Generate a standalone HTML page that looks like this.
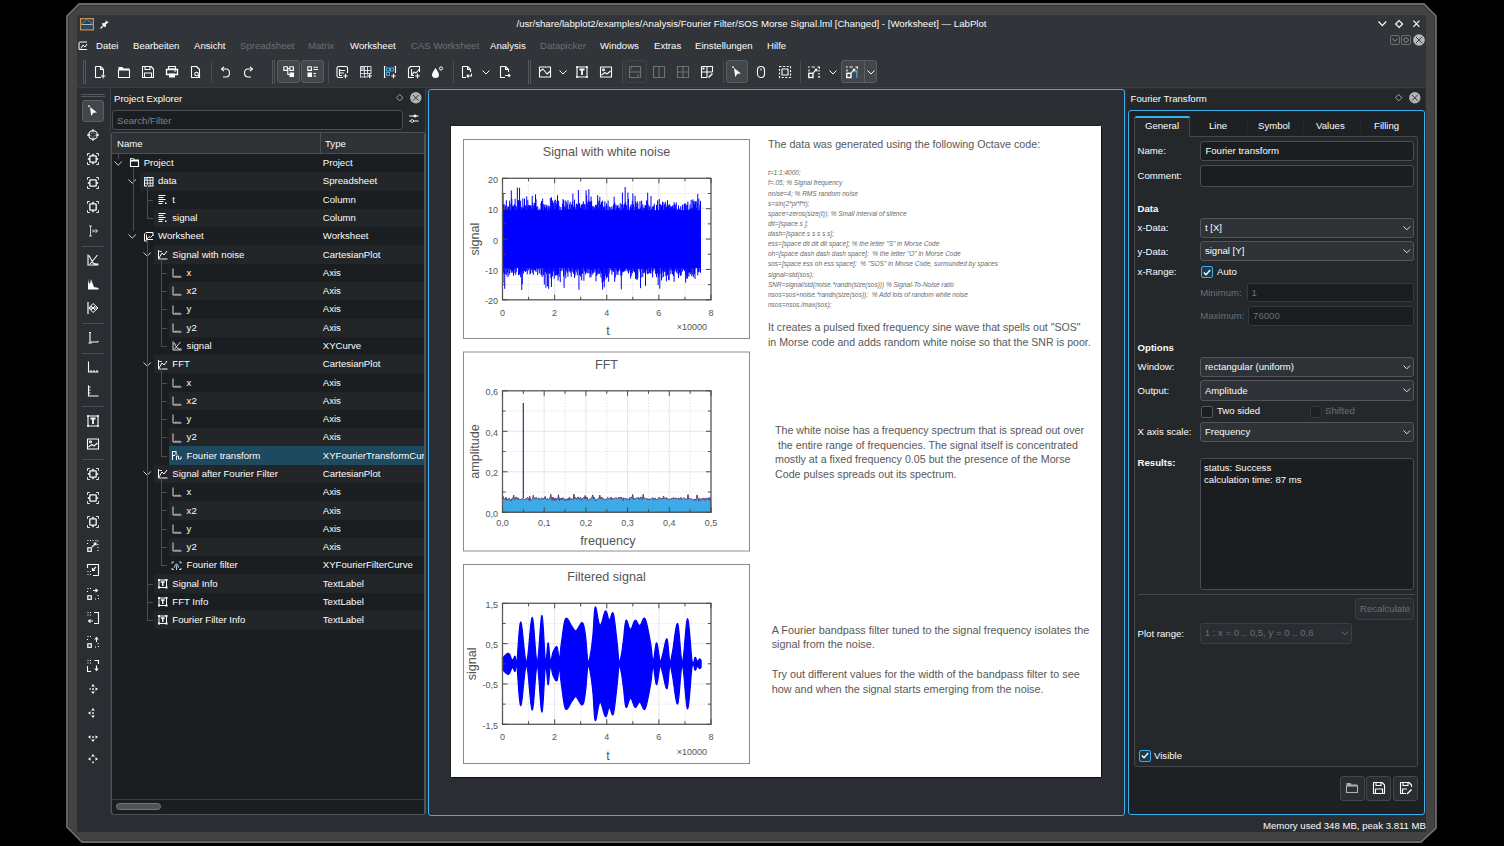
<!DOCTYPE html><html><head><meta charset="utf-8"><style>
*{margin:0;padding:0;box-sizing:border-box}
html,body{width:1504px;height:846px;overflow:hidden;background:#000}
body{position:relative;font-family:"Liberation Sans",sans-serif;}
.t{position:absolute;white-space:nowrap;line-height:1.2}
svg{position:absolute;overflow:visible}
</style></head><body>
<svg style="left:0px;top:0px;" width="1504" height="846" viewBox="0 0 1504 846"><polygon points="79,4 1424,4 1436,16 1436,828 1421,842 82,842 67,827 67,16" fill="#434343" stroke="#686868" stroke-width="1.8"/><polygon points="80,5.5 1423,5.5 1434.5,17 1434.5,827 1420,840.5 83,840.5 68.5,826 68.5,17" fill="none" stroke="#353535" stroke-width="0.8"/></svg>
<div style="position:absolute;left:77px;top:14px;width:1349px;height:1px;background:#42464c;"></div>
<div style="position:absolute;left:77px;top:15px;width:1349px;height:816.5px;background:#2a2e32;"></div>
<div style="position:absolute;left:77px;top:15px;width:1349px;height:72px;background:#313539;"></div>
<svg style="left:80px;top:18px;" width="14" height="12.5" viewBox="0 0 14 12.5"><rect x="0.6" y="0.6" width="12.8" height="11.3" fill="#2f4152" stroke="#c8944a" stroke-width="1.2"/><path d="M1.5 6 L6.8 1.2 L12.5 6" fill="none" stroke="#5b8fbf" stroke-width="0.9"/><path d="M1.5 6.5 H12.5" stroke="#c8d8e8" stroke-width="0.8"/><path d="M2.5 7 L6.8 11 L11.5 7" fill="none" stroke="#3f607e" stroke-width="0.8"/></svg>
<svg style="left:100px;top:19.5px;" width="9" height="9" viewBox="0 0 9 9"><path d="M0.5 8.5 L3.5 5.5" stroke="#fcfcfc" stroke-width="1.1"/><path d="M2.2 4 L5 6.8 L5.6 6.2 L5.2 4.8 L7.6 2.6 L8.2 2.8 L6.2 0.8 L6.4 1.4 L4.2 3.8 L2.8 3.4 Z" fill="#fcfcfc" stroke="#fcfcfc" stroke-width="0.9" stroke-linejoin="round"/></svg>
<div class="t" style="left:77px;width:1349px;text-align:center;top:18.3px;font-size:9.65px;color:#fcfcfc">/usr/share/labplot2/examples/Analysis/Fourier Filter/SOS Morse Signal.lml [Changed] - [Worksheet] — LabPlot</div>
<svg style="left:1378px;top:21px;" width="9" height="6" viewBox="0 0 9 6"><path d="M0.5 0.5 L4.3 4.7 L8.2 0.5" fill="none" stroke="#fcfcfc" stroke-width="1.2"/></svg>
<svg style="left:1395px;top:20px;" width="9" height="9" viewBox="0 0 9 9"><path d="M4.1 0.6 L7.6 4 L4.1 7.5 L0.6 4 Z" fill="none" stroke="#fcfcfc" stroke-width="1.2"/></svg>
<svg style="left:1413px;top:20px;" width="7" height="8" viewBox="0 0 7 8"><path d="M0.4 0.6 L6.4 6.8 M6.4 0.6 L0.4 6.8" fill="none" stroke="#fcfcfc" stroke-width="1.2"/></svg>
<svg style="left:78px;top:41px;" width="10" height="9" viewBox="0 0 10 9"><path d="M1 8.5 V2 Q1 1 2 1 H9 M3 7.5 L5 4 L7 6 L9 3 M1 8.5 H9" fill="none" stroke="#fcfcfc" stroke-width="1"/></svg>
<div class="t" style="left:96px;top:39.55px;font-size:9.6px;color:#fcfcfc;">Datei</div>
<div class="t" style="left:133px;top:39.55px;font-size:9.6px;color:#fcfcfc;">Bearbeiten</div>
<div class="t" style="left:194px;top:39.55px;font-size:9.6px;color:#fcfcfc;">Ansicht</div>
<div class="t" style="left:240px;top:39.55px;font-size:9.6px;color:#6b6f73;">Spreadsheet</div>
<div class="t" style="left:308px;top:39.55px;font-size:9.6px;color:#6b6f73;">Matrix</div>
<div class="t" style="left:350px;top:39.55px;font-size:9.6px;color:#fcfcfc;">Worksheet</div>
<div class="t" style="left:411px;top:39.55px;font-size:9.6px;color:#6b6f73;">CAS Worksheet</div>
<div class="t" style="left:490px;top:39.55px;font-size:9.6px;color:#fcfcfc;">Analysis</div>
<div class="t" style="left:540px;top:39.55px;font-size:9.6px;color:#6b6f73;">Datapicker</div>
<div class="t" style="left:600px;top:39.55px;font-size:9.6px;color:#fcfcfc;">Windows</div>
<div class="t" style="left:654px;top:39.55px;font-size:9.6px;color:#fcfcfc;">Extras</div>
<div class="t" style="left:695px;top:39.55px;font-size:9.6px;color:#fcfcfc;">Einstellungen</div>
<div class="t" style="left:767px;top:39.55px;font-size:9.6px;color:#fcfcfc;">Hilfe</div>
<div style="position:absolute;left:1390px;top:35px;width:10px;height:10px;border:1px solid #6a6e72;border-radius:2px;"></div>
<svg style="left:1392px;top:38px;" width="6" height="4" viewBox="0 0 6 4"><path d="M0.3 0.5 L3 3.2 L5.7 0.5" fill="none" stroke="#9a9da0" stroke-width="0.9"/></svg>
<div style="position:absolute;left:1401px;top:35px;width:10px;height:10px;border:1px solid #6a6e72;border-radius:2px;"></div>
<svg style="left:1403px;top:37px;" width="6" height="6" viewBox="0 0 6 6"><path d="M3 0.3 L5.7 3 L3 5.7 L0.3 3 Z" fill="none" stroke="#9a9da0" stroke-width="0.9"/></svg>
<svg style="left:1413px;top:34px;" width="12" height="12" viewBox="0 0 12 12"><circle cx="6" cy="6" r="5.8" fill="#b9b9b9"/><path d="M3 3 L9 9 M9 3 L3 9" stroke="#2a2a2a" stroke-width="0.9"/></svg>
<div style="position:absolute;left:77px;top:87px;width:1349px;height:1px;background:#3b3f43;"></div>
<div style="position:absolute;left:83px;top:60px;width:1px;height:24px;background:#55595d;"></div><div style="position:absolute;left:85px;top:60px;width:1px;height:24px;background:#55595d;"></div>
<svg style="left:94.0px;top:65.8px;opacity:1.0;" width="12" height="12" viewBox="0 0 12 12"><path d="M1.5 0.5 H6.5 L9.5 3.5 V8 M7 11.5 H1.5 V0.5" fill="none" stroke="#fcfcfc" stroke-width="1.1" stroke-linejoin="round"/><path d="M6.5 0.5 V3.5 H9.5" fill="none" stroke="#fcfcfc" stroke-width="1.1" stroke-linejoin="round"/><path d="M9.2 7.8 V12.2 M6.999999999999999 10 H11.399999999999999" stroke="#fcfcfc" stroke-width="1.1"/></svg>
<svg style="left:118.0px;top:65.8px;opacity:1.0;" width="12" height="12" viewBox="0 0 12 12"><path d="M0.5 1 H4.5 L5.5 2.5 H11.5 V4 H0.5 Z" fill="#fcfcfc"/><rect x="0.5" y="4" width="11" height="7.5" fill="none" stroke="#fcfcfc" stroke-width="1.1" stroke-linejoin="round"/></svg>
<svg style="left:142.0px;top:65.8px;opacity:1.0;" width="12" height="12" viewBox="0 0 12 12"><path d="M0.5 0.5 H9 L11.5 3 V11.5 H0.5 Z" fill="none" stroke="#fcfcfc" stroke-width="1.1" stroke-linejoin="round"/><rect x="3" y="0.5" width="5" height="3" fill="none" stroke="#fcfcfc" stroke-width="1.1" stroke-linejoin="round"/><rect x="2.5" y="7" width="7" height="4.5" fill="none" stroke="#fcfcfc" stroke-width="1.1" stroke-linejoin="round"/></svg>
<svg style="left:166.0px;top:65.8px;opacity:1.0;" width="12" height="12" viewBox="0 0 12 12"><rect x="2.5" y="0.5" width="7" height="2.5" fill="none" stroke="#fcfcfc" stroke-width="1.1" stroke-linejoin="round"/><path d="M0.5 3.5 H11.5 V8.5 H0.5 Z" fill="none" stroke="#fcfcfc" stroke-width="1.3"/><rect x="3" y="7.5" width="6" height="4" fill="#fcfcfc"/><path d="M8 5 H10" stroke="#fcfcfc"/></svg>
<svg style="left:190.0px;top:65.8px;opacity:1.0;" width="12" height="12" viewBox="0 0 12 12"><path d="M1.5 0.5 H6.5 L9.5 3.5 V11.5 H1.5 Z" fill="none" stroke="#fcfcfc" stroke-width="1.1" stroke-linejoin="round"/><circle cx="6.5" cy="8" r="1.8" fill="none" stroke="#fcfcfc" stroke-width="1.1" stroke-linejoin="round"/><path d="M7.8 9.3 L10 11.5" fill="none" stroke="#fcfcfc" stroke-width="1.1" stroke-linejoin="round"/></svg>
<div style="position:absolute;left:210.5px;top:61px;width:1px;height:22px;background:#4a4e52;"></div>
<svg style="left:219.0px;top:65.8px;opacity:1.0;" width="12" height="12" viewBox="0 0 12 12"><path d="M3 3 H7 Q10.5 3 10.5 7 Q10.5 11 6.5 11 H4" fill="none" stroke="#fcfcfc" stroke-width="1.1" stroke-linejoin="round"/><path d="M5 0.8 L2.5 3 L5 5.2" fill="none" stroke="#fcfcfc" stroke-width="1.1" stroke-linejoin="round"/></svg>
<svg style="left:243.0px;top:65.8px;opacity:1.0;" width="12" height="12" viewBox="0 0 12 12"><path d="M9 3 H5 Q1.5 3 1.5 7 Q1.5 11 5.5 11 H8" fill="none" stroke="#fcfcfc" stroke-width="1.1" stroke-linejoin="round"/><path d="M7 0.8 L9.5 3 L7 5.2" fill="none" stroke="#fcfcfc" stroke-width="1.1" stroke-linejoin="round"/></svg>
<div style="position:absolute;left:272px;top:60px;width:1px;height:24px;background:#55595d;"></div><div style="position:absolute;left:274px;top:60px;width:1px;height:24px;background:#55595d;"></div>
<div style="position:absolute;left:277px;top:60px;width:23px;height:23px;background:#43474b;border:1px solid #5b5f63;border-radius:3px;"></div>
<div style="position:absolute;left:301px;top:60px;width:23px;height:23px;background:#43474b;border:1px solid #5b5f63;border-radius:3px;"></div>
<svg style="left:282.5px;top:65.8px;opacity:1.0;" width="12" height="12" viewBox="0 0 12 12"><rect x="0.8" y="0.8" width="3.6" height="3.6" fill="none" stroke="#fcfcfc" stroke-width="1.1" stroke-linejoin="round"/><rect x="6.8" y="0.8" width="3.6" height="3.6" fill="none" stroke="#fcfcfc" stroke-width="1.1" stroke-linejoin="round"/><path d="M4.4 2.6 H6.8 M4.8 4.4 V8.5 H6.5" fill="none" stroke="#fcfcfc" stroke-width="1.1" stroke-linejoin="round"/><rect x="6.5" y="6.5" width="4.5" height="4.5" fill="#fcfcfc"/></svg>
<svg style="left:306.5px;top:65.8px;opacity:1.0;" width="12" height="12" viewBox="0 0 12 12"><rect x="0.8" y="0.8" width="3.6" height="3.6" fill="none" stroke="#fcfcfc" stroke-width="1.1" stroke-linejoin="round"/><path d="M6.5 1.2 H11 M6.5 3.5 H11 M6.5 7.5 H9 M6.5 10 H9" stroke="#fcfcfc" stroke-width="1.1"/><rect x="0.5" y="6.5" width="4.5" height="4.5" fill="#fcfcfc"/></svg>
<div style="position:absolute;left:327.5px;top:61px;width:1px;height:22px;background:#4a4e52;"></div>
<svg style="left:336.0px;top:65.8px;opacity:1.0;" width="12" height="12" viewBox="0 0 12 12"><path d="M1 1.5 Q1 0.5 3 0.5 H10 Q11.5 0.5 11.5 2 V7 M1 1.5 V10 Q1 11.5 3 11.5 H7" fill="none" stroke="#fcfcfc" stroke-width="1.1" stroke-linejoin="round"/><path d="M3.5 4.5 H9 M3.5 7 H8 M3.5 9.5 H6 M3.5 3 V10" fill="none" stroke="#fcfcfc" stroke-width="1.1" stroke-linejoin="round"/><path d="M9.5 7.8 V12.2 M7.3 10 H11.7" stroke="#fcfcfc" stroke-width="1.1"/></svg>
<svg style="left:360.0px;top:65.8px;opacity:1.0;" width="12" height="12" viewBox="0 0 12 12"><rect x="0.5" y="0.5" width="3.5" height="3.5" fill="#3daee9"/><path d="M0.5 0.5 V11.5" stroke="#fcfcfc" stroke-width="0.8"/><path d="M4.5 0.5 V11.5" stroke="#fcfcfc" stroke-width="0.8"/><path d="M7.5 0.5 V11.5" stroke="#fcfcfc" stroke-width="0.8"/><path d="M11 0.5 V11.5" stroke="#fcfcfc" stroke-width="0.8"/><path d="M0.5 0.5 H11" stroke="#fcfcfc" stroke-width="0.8"/><path d="M0.5 4.5 H11" stroke="#fcfcfc" stroke-width="0.8"/><path d="M0.5 7.5 H11" stroke="#fcfcfc" stroke-width="0.8"/><path d="M0.5 11 H11" stroke="#fcfcfc" stroke-width="0.8"/><rect x="7.5" y="8" width="4.5" height="4" fill="#313539"/><path d="M9.7 7.8 V12.2 M7.499999999999999 10 H11.899999999999999" stroke="#fcfcfc" stroke-width="1.1"/></svg>
<svg style="left:384.0px;top:65.8px;opacity:1.0;" width="12" height="12" viewBox="0 0 12 12"><path d="M1.5 0.5 H0.5 V11.5 H1.5 M10.5 0.5 H11.5 V7" fill="none" stroke="#fcfcfc" stroke-width="1.1" stroke-linejoin="round"/><rect x="2.5" y="2" width="3" height="3" fill="none" stroke="#3daee9" stroke-width="1"/><rect x="6.5" y="2" width="3" height="3" fill="none" stroke="#3daee9" stroke-width="1"/><rect x="2.5" y="6.5" width="3" height="3" fill="none" stroke="#3daee9" stroke-width="1"/><path d="M9.5 7.8 V12.2 M7.3 10 H11.7" stroke="#fcfcfc" stroke-width="1.1"/></svg>
<svg style="left:407.5px;top:65.8px;opacity:1.0;" width="12" height="12" viewBox="0 0 12 12"><path d="M0.5 2.5 L2.5 0.5 H11.5 V6 M0.5 2.5 V11.5 H6" fill="none" stroke="#fcfcfc" stroke-width="1.1" stroke-linejoin="round"/><path d="M3.5 3 V9.5 H6 M3.5 9.5 L6 6 L8 7 L11 3.5" fill="none" stroke="#fcfcfc" stroke-width="1.1" stroke-linejoin="round"/><path d="M9.5 7.8 V12.2 M7.3 10 H11.7" stroke="#fcfcfc" stroke-width="1.1"/></svg>
<svg style="left:431.0px;top:65.8px;opacity:1.0;" width="12" height="12" viewBox="0 0 12 12"><path d="M4.5 2 Q1 7 1 8.5 A3.5 3.5 0 0 0 8 8.5 Q8 7 4.5 2 Z" fill="#fcfcfc"/><circle cx="10" cy="2.5" r="1.6" fill="none" stroke="#fcfcfc" stroke-width="1"/></svg>
<div style="position:absolute;left:452.5px;top:61px;width:1px;height:22px;background:#4a4e52;"></div>
<svg style="left:461.0px;top:65.8px;opacity:1.0;" width="12" height="12" viewBox="0 0 12 12"><path d="M1.5 0.5 H6.5 L9.5 3.5 V6 M5 11.5 H1.5 V0.5" fill="none" stroke="#fcfcfc" stroke-width="1.1" stroke-linejoin="round"/><path d="M6.5 0.5 V3.5 H9.5" fill="none" stroke="#fcfcfc" stroke-width="1.1" stroke-linejoin="round"/><path d="M10.5 7.5 V10 H6 M7.5 8.5 L6 10 L7.5 11.5" fill="none" stroke="#fcfcfc" stroke-width="1.1" stroke-linejoin="round"/></svg>
<svg style="left:480.0px;top:65.8px;opacity:1.0;" width="12" height="12" viewBox="0 0 12 12"><path d="M2.5 4.5 L6 8 L9.5 4.5" fill="none" stroke="#fcfcfc" stroke-width="1"/></svg>
<svg style="left:499.0px;top:65.8px;opacity:1.0;" width="12" height="12" viewBox="0 0 12 12"><path d="M1.5 0.5 H6.5 L9.5 3.5 V6 M6 11.5 H1.5 V0.5" fill="none" stroke="#fcfcfc" stroke-width="1.1" stroke-linejoin="round"/><path d="M6.5 0.5 V3.5 H9.5" fill="none" stroke="#fcfcfc" stroke-width="1.1" stroke-linejoin="round"/><path d="M6 9.5 H11 M9.5 8 L11 9.5 L9.5 11" fill="none" stroke="#fcfcfc" stroke-width="1.1" stroke-linejoin="round"/></svg>
<div style="position:absolute;left:527.5px;top:60px;width:1px;height:24px;background:#55595d;"></div><div style="position:absolute;left:529.5px;top:60px;width:1px;height:24px;background:#55595d;"></div>
<svg style="left:538.5px;top:65.8px;opacity:1.0;" width="12" height="12" viewBox="0 0 12 12"><rect x="0.5" y="1" width="11" height="10" fill="none" stroke="#fcfcfc" stroke-width="1.1" stroke-linejoin="round"/><path d="M0.5 5.5 L4 3 L8 8 L11.5 5" fill="none" stroke="#fcfcfc" stroke-width="1.1" stroke-linejoin="round"/></svg>
<svg style="left:557.0px;top:65.8px;opacity:1.0;" width="12" height="12" viewBox="0 0 12 12"><path d="M2.5 4.5 L6 8 L9.5 4.5" fill="none" stroke="#fcfcfc" stroke-width="1"/></svg>
<svg style="left:576.0px;top:65.8px;opacity:1.0;" width="12" height="12" viewBox="0 0 12 12"><rect x="1" y="1" width="10" height="10" fill="none" stroke="#fcfcfc" stroke-width="1.1" stroke-linejoin="round"/><path d="M3.5 3.5 H8.5 M6 3.5 V9" stroke="#fcfcfc" stroke-width="1.8"/><circle cx="1" cy="1" r="1" fill="#fcfcfc"/><circle cx="11" cy="1" r="1" fill="#fcfcfc"/><circle cx="1" cy="11" r="1" fill="#fcfcfc"/><circle cx="11" cy="11" r="1" fill="#fcfcfc"/></svg>
<svg style="left:600.0px;top:65.8px;opacity:1.0;" width="12" height="12" viewBox="0 0 12 12"><rect x="0.5" y="1" width="11" height="10" fill="none" stroke="#fcfcfc" stroke-width="1.1" stroke-linejoin="round"/><circle cx="3.5" cy="3.8" r="1" fill="none" stroke="#fcfcfc" stroke-width="1.1" stroke-linejoin="round"/><path d="M1.5 9 L5 6.5 L7 8 L10.5 5" fill="none" stroke="#fcfcfc" stroke-width="1.1" stroke-linejoin="round"/></svg>
<div style="position:absolute;left:621.5px;top:61px;width:1px;height:22px;background:#4a4e52;"></div>
<div style="position:absolute;left:625px;top:60px;width:22px;height:23px;background:#33373b;border:1px solid #3f4347;border-radius:3px;"></div>
<svg style="left:629.0px;top:65.8px;opacity:0.3;" width="12" height="12" viewBox="0 0 12 12"><rect x="0.5" y="0.5" width="11" height="11" fill="none" stroke="#fcfcfc" stroke-width="1.1" stroke-linejoin="round"/><path d="M0.5 6 H11.5" fill="none" stroke="#fcfcfc" stroke-width="1.1" stroke-linejoin="round"/><path d="M2 2 L3 3 M8 9 L10 10" fill="none" stroke="#fcfcfc" stroke-width="1.1" stroke-linejoin="round"/></svg>
<svg style="left:653.0px;top:65.8px;opacity:0.3;" width="12" height="12" viewBox="0 0 12 12"><rect x="0.5" y="0.5" width="11" height="11" fill="none" stroke="#fcfcfc" stroke-width="1.1" stroke-linejoin="round"/><path d="M6 0.5 V11.5" fill="none" stroke="#fcfcfc" stroke-width="1.1" stroke-linejoin="round"/></svg>
<svg style="left:677.0px;top:65.8px;opacity:0.3;" width="12" height="12" viewBox="0 0 12 12"><rect x="0.5" y="0.5" width="11" height="11" fill="none" stroke="#fcfcfc" stroke-width="1.1" stroke-linejoin="round"/><path d="M6 0.5 V11.5 M0.5 6 H11.5" fill="none" stroke="#fcfcfc" stroke-width="1.1" stroke-linejoin="round"/></svg>
<svg style="left:700.5px;top:65.8px;opacity:1.0;" width="12" height="12" viewBox="0 0 12 12"><path d="M0.5 0.5 H11.5 V6 M0.5 0.5 V11.5 H6 M6 0.5 V11.5 M0.5 6 H11.5" fill="none" stroke="#fcfcfc" stroke-width="1.1" stroke-linejoin="round"/><path d="M7 11 L11 7 L12 8 L8 12 Z" fill="#fcfcfc"/><rect x="1.5" y="1.5" width="2" height="2" fill="#fcfcfc"/></svg>
<div style="position:absolute;left:722.5px;top:61px;width:1px;height:22px;background:#4a4e52;"></div>
<div style="position:absolute;left:726px;top:60px;width:22px;height:23px;background:#43474b;border:1px solid #5b5f63;border-radius:3px;"></div>
<svg style="left:731.0px;top:65.8px;opacity:1.0;" width="12" height="12" viewBox="0 0 12 12"><path d="M3 2 L10 7.5 L6.5 7.8 L4.2 11 Z" fill="#fcfcfc"/><circle cx="2" cy="1.2" r="0.9" fill="#fcfcfc"/></svg>
<svg style="left:755.0px;top:65.8px;opacity:1.0;" width="12" height="12" viewBox="0 0 12 12"><rect x="2.5" y="0.5" width="7" height="11" rx="3.5" fill="none" stroke="#fcfcfc" stroke-width="1.1" stroke-linejoin="round"/><path d="M6 2.5 V4.5" fill="none" stroke="#fcfcfc" stroke-width="1.1" stroke-linejoin="round"/></svg>
<svg style="left:779.0px;top:65.8px;opacity:1.0;" width="12" height="12" viewBox="0 0 12 12"><rect x="0.5" y="0.5" width="11.0" height="11.0" fill="none" stroke="#fcfcfc" stroke-width="1.1" stroke-dasharray="2 1.6"/><rect x="3" y="3" width="6" height="6" fill="none" stroke="#fcfcfc" stroke-width="1.1" stroke-linejoin="round"/></svg>
<div style="position:absolute;left:799.5px;top:61px;width:1px;height:22px;background:#4a4e52;"></div>
<svg style="left:808.0px;top:65.8px;opacity:1.0;" width="12" height="12" viewBox="0 0 12 12"><path d="M0 1 h1.8 M3.6 1 h3.2 M9.4 1 h2 V2.8 M1 3.6 v1.8" fill="none" stroke="#fcfcfc" stroke-width="1.2"/><rect x="0.8" y="7.3" width="4.2" height="4.2" fill="none" stroke="#fcfcfc" stroke-width="1.4"/><path d="M5.2 6.8 L8 4" stroke="#fcfcfc" stroke-width="1.1"/><path d="M6.2 2.8 L9.3 2.8 L9.3 5.9 Z" fill="#fcfcfc"/><path d="M11 4 v1.6 M11 7 v1.6 M9.8 11 h1.7 V10" fill="none" stroke="#fcfcfc" stroke-width="1.2"/></svg>
<svg style="left:827.0px;top:65.8px;opacity:1.0;" width="12" height="12" viewBox="0 0 12 12"><path d="M2.5 4.5 L6 8 L9.5 4.5" fill="none" stroke="#fcfcfc" stroke-width="1"/></svg>
<div style="position:absolute;left:841px;top:60px;width:36px;height:23px;background:#43474b;border:1px solid #5b5f63;border-radius:3px;"></div>
<div style="position:absolute;left:864px;top:61px;width:1px;height:21px;background:#5b5f63;"></div>
<svg style="left:846.0px;top:65.8px;opacity:1.0;" width="12" height="12" viewBox="0 0 12 12"><path d="M0 1 h1.8 M3.6 1 h3.2 M9.4 1 h2 V2.8 M1 3.6 v1.8" fill="none" stroke="#fcfcfc" stroke-width="1.2"/><rect x="0.8" y="7.3" width="4.2" height="4.2" fill="none" stroke="#fcfcfc" stroke-width="1.4"/><path d="M5.2 6.8 L8 4" stroke="#fcfcfc" stroke-width="1.1"/><path d="M6.2 2.8 L9.3 2.8 L9.3 5.9 Z" fill="#fcfcfc"/><path d="M9.2 5.9 L10.9 4.9 V11.7" fill="none" stroke="#3daee9" stroke-width="1.3"/></svg>
<svg style="left:865.0px;top:65.8px;opacity:1.0;" width="12" height="12" viewBox="0 0 12 12"><path d="M2.5 4.5 L6 8 L9.5 4.5" fill="none" stroke="#fcfcfc" stroke-width="1"/></svg>
<div style="position:absolute;left:81px;top:94px;width:24px;height:1px;background:#55595d;"></div>
<div style="position:absolute;left:81px;top:96px;width:24px;height:1px;background:#55595d;"></div>
<div style="position:absolute;left:82px;top:100px;width:22px;height:22px;background:#43474b;border:1px solid #5b5f63;border-radius:3px;"></div>
<svg style="left:87px;top:105px;opacity:1.0;" width="12" height="12" viewBox="0 0 12 12"><path d="M3 2 L10 7.5 L6.5 7.8 L4.2 11 Z" fill="#fcfcfc"/><circle cx="2" cy="1.2" r="0.9" fill="#fcfcfc"/></svg>
<svg style="left:87px;top:129px;opacity:1;" width="12" height="12" viewBox="0 0 12 12"><circle cx="6" cy="6" r="4.3" fill="none" stroke="#fcfcfc" stroke-width="1.1"/><circle cx="6" cy="6" r="2.2" fill="none" stroke="#d0d0d0" stroke-width="0.8" stroke-dasharray="1 0.8"/><path d="M6 0.2 V2.8 M6 9.2 V11.8 M0.2 6 H2.8 M9.2 6 H11.8" stroke="#fcfcfc" stroke-width="1.3"/></svg>
<svg style="left:87px;top:153px;opacity:1;" width="12" height="12" viewBox="0 0 12 12"><path d="M0.5 2.8 V0.5 H2.8 M9.2 0.5 H11.5 V2.8 M11.5 9.2 V11.5 H9.2 M2.8 11.5 H0.5 V9.2" fill="none" stroke="#e8e8e8" stroke-width="1"/><rect x="2.8" y="2.8" width="6.4" height="6.4" rx="0.8" fill="none" stroke="#fcfcfc" stroke-width="1.3"/><path d="M5 1.8 H7 L6 0.8 Z" fill="#fcfcfc" stroke="#fcfcfc" stroke-width="0.6"/><path d="M5 10.2 H7 L6 11.2 Z" fill="#fcfcfc" stroke="#fcfcfc" stroke-width="0.6"/><path d="M1.8 5 V7 L0.8 6 Z" fill="#fcfcfc" stroke="#fcfcfc" stroke-width="0.6"/><path d="M10.2 5 V7 L11.2 6 Z" fill="#fcfcfc" stroke="#fcfcfc" stroke-width="0.6"/></svg>
<svg style="left:87px;top:177px;opacity:1;" width="12" height="12" viewBox="0 0 12 12"><path d="M0.5 2.8 V0.5 H2.8 M9.2 0.5 H11.5 V2.8 M11.5 9.2 V11.5 H9.2 M2.8 11.5 H0.5 V9.2" fill="none" stroke="#e8e8e8" stroke-width="1"/><rect x="2.8" y="2.8" width="6.4" height="6.4" rx="0.8" fill="none" stroke="#fcfcfc" stroke-width="1.3"/><path d="M1.8 5 V7 L0.8 6 Z" fill="#fcfcfc" stroke="#fcfcfc" stroke-width="0.6"/><path d="M10.2 5 V7 L11.2 6 Z" fill="#fcfcfc" stroke="#fcfcfc" stroke-width="0.6"/></svg>
<svg style="left:87px;top:201px;opacity:1;" width="12" height="12" viewBox="0 0 12 12"><path d="M0.5 2.8 V0.5 H2.8 M9.2 0.5 H11.5 V2.8 M11.5 9.2 V11.5 H9.2 M2.8 11.5 H0.5 V9.2" fill="none" stroke="#e8e8e8" stroke-width="1"/><rect x="2.8" y="2.8" width="6.4" height="6.4" rx="0.8" fill="none" stroke="#fcfcfc" stroke-width="1.3"/><path d="M5 1.8 H7 L6 0.8 Z" fill="#fcfcfc" stroke="#fcfcfc" stroke-width="0.6"/><path d="M5 10.2 H7 L6 11.2 Z" fill="#fcfcfc" stroke="#fcfcfc" stroke-width="0.6"/></svg>
<svg style="left:87px;top:224.5px;opacity:0.75;" width="12" height="12" viewBox="0 0 12 12"><path d="M2 1 H5 M3.5 1 V11 M2 11 H5 M6 6 H10.5 M8.5 4 L10.5 6 L8.5 8 M6 4.5 V7.5" fill="none" stroke="#fcfcfc" stroke-width="1"/></svg>
<div style="position:absolute;left:82px;top:245.5px;width:22px;height:1px;background:#4a4e52;"></div>
<svg style="left:87px;top:254px;opacity:1.0;" width="12" height="12" viewBox="0 0 12 12"><path d="M1 0.5 V11 H11.5 M2 1.5 L6 9 Q8 10.5 11.5 10 M10.5 1 L3 10" fill="none" stroke="#fcfcfc" stroke-width="1.1"/></svg>
<svg style="left:87px;top:278px;opacity:1.0;" width="12" height="12" viewBox="0 0 12 12"><path d="M1 0.5 V11.5 H11.5 V10 L7 9 L5 4 L4 1 L3 6 L1.5 4 Z" fill="#fcfcfc"/></svg>
<svg style="left:87px;top:302px;opacity:1.0;" width="12" height="12" viewBox="0 0 12 12"><path d="M1 0 V12" stroke="#fcfcfc" stroke-width="1.2"/><path d="M2 6 L6 1.5 L11 6 L6 10.5 Z M2 6 L11 6 M4 4 L8 8 M4 8 L8 4" fill="none" stroke="#fcfcfc" stroke-width="1"/></svg>
<div style="position:absolute;left:82px;top:322.5px;width:22px;height:1px;background:#4a4e52;"></div>
<svg style="left:87px;top:332px;opacity:1.0;" width="12" height="12" viewBox="0 0 12 12"><path d="M2 0.5 H4 M3 0.5 V11 M1.5 11 H4.5 M4 10 H11 M11 9 V10" fill="none" stroke="#fcfcfc" stroke-width="1.1"/></svg>
<div style="position:absolute;left:82px;top:352.5px;width:22px;height:1px;background:#4a4e52;"></div>
<svg style="left:87px;top:361px;opacity:1.0;" width="12" height="12" viewBox="0 0 12 12"><path d="M1.5 0.5 V11 H11.5 M4 9 V11 M7 9 V11 M10 9 V11" fill="none" stroke="#fcfcfc" stroke-width="1.1"/></svg>
<svg style="left:87px;top:384.5px;opacity:1.0;" width="12" height="12" viewBox="0 0 12 12"><path d="M1.5 0.5 V11 H11.5 M1.5 2 H3.5 M1.5 5 H3.5 M1.5 8 H3.5" fill="none" stroke="#fcfcfc" stroke-width="1.1"/></svg>
<div style="position:absolute;left:82px;top:405.5px;width:22px;height:1px;background:#4a4e52;"></div>
<svg style="left:87px;top:414.5px;opacity:1.0;" width="12" height="12" viewBox="0 0 12 12"><rect x="1" y="1" width="10" height="10" fill="none" stroke="#fcfcfc" stroke-width="1.1" stroke-linejoin="round"/><path d="M3.5 3.5 H8.5 M6 3.5 V9" stroke="#fcfcfc" stroke-width="1.8"/><circle cx="1" cy="1" r="1" fill="#fcfcfc"/><circle cx="11" cy="1" r="1" fill="#fcfcfc"/><circle cx="1" cy="11" r="1" fill="#fcfcfc"/><circle cx="11" cy="11" r="1" fill="#fcfcfc"/></svg>
<svg style="left:87px;top:438px;opacity:1.0;" width="12" height="12" viewBox="0 0 12 12"><rect x="0.5" y="1" width="11" height="10" fill="none" stroke="#fcfcfc" stroke-width="1.1" stroke-linejoin="round"/><circle cx="3.5" cy="3.8" r="1" fill="none" stroke="#fcfcfc" stroke-width="1.1" stroke-linejoin="round"/><path d="M1.5 9 L5 6.5 L7 8 L10.5 5" fill="none" stroke="#fcfcfc" stroke-width="1.1" stroke-linejoin="round"/></svg>
<div style="position:absolute;left:82px;top:458.5px;width:22px;height:1px;background:#4a4e52;"></div>
<svg style="left:87px;top:467.5px;opacity:1.0;" width="12" height="12" viewBox="0 0 12 12"><path d="M0.5 2.8 V0.5 H2.8 M9.2 0.5 H11.5 V2.8 M11.5 9.2 V11.5 H9.2 M2.8 11.5 H0.5 V9.2" fill="none" stroke="#e8e8e8" stroke-width="1"/><rect x="2.8" y="2.8" width="6.4" height="6.4" rx="0.8" fill="none" stroke="#fcfcfc" stroke-width="1.3"/><path d="M5 1.8 H7 L6 0.8 Z" fill="#fcfcfc" stroke="#fcfcfc" stroke-width="0.6"/><path d="M5 10.2 H7 L6 11.2 Z" fill="#fcfcfc" stroke="#fcfcfc" stroke-width="0.6"/><path d="M1.8 5 V7 L0.8 6 Z" fill="#fcfcfc" stroke="#fcfcfc" stroke-width="0.6"/><path d="M10.2 5 V7 L11.2 6 Z" fill="#fcfcfc" stroke="#fcfcfc" stroke-width="0.6"/></svg>
<svg style="left:87px;top:491.5px;opacity:1.0;" width="12" height="12" viewBox="0 0 12 12"><path d="M0.5 2.8 V0.5 H2.8 M9.2 0.5 H11.5 V2.8 M11.5 9.2 V11.5 H9.2 M2.8 11.5 H0.5 V9.2" fill="none" stroke="#e8e8e8" stroke-width="1"/><rect x="2.8" y="2.8" width="6.4" height="6.4" rx="0.8" fill="none" stroke="#fcfcfc" stroke-width="1.3"/><path d="M1.8 5 V7 L0.8 6 Z" fill="#fcfcfc" stroke="#fcfcfc" stroke-width="0.6"/><path d="M10.2 5 V7 L11.2 6 Z" fill="#fcfcfc" stroke="#fcfcfc" stroke-width="0.6"/></svg>
<svg style="left:87px;top:515.5px;opacity:1.0;" width="12" height="12" viewBox="0 0 12 12"><path d="M0.5 2.8 V0.5 H2.8 M9.2 0.5 H11.5 V2.8 M11.5 9.2 V11.5 H9.2 M2.8 11.5 H0.5 V9.2" fill="none" stroke="#e8e8e8" stroke-width="1"/><rect x="2.8" y="2.8" width="6.4" height="6.4" rx="0.8" fill="none" stroke="#fcfcfc" stroke-width="1.3"/><path d="M5 1.8 H7 L6 0.8 Z" fill="#fcfcfc" stroke="#fcfcfc" stroke-width="0.6"/><path d="M5 10.2 H7 L6 11.2 Z" fill="#fcfcfc" stroke="#fcfcfc" stroke-width="0.6"/></svg>
<svg style="left:87px;top:539.5px;opacity:1.0;" width="12" height="12" viewBox="0 0 12 12"><path d="M0.5 0.5 h1 M3 0.5 h1 M5.5 0.5 h1 M8.5 0.5 h1 M11 0.5 v1 M11 4 v1 M11 7 v1 M11 10 v1 M0.5 3 v1" stroke="#fcfcfc" stroke-width="1.1"/><rect x="0.8" y="7.8" width="3.5" height="3.5" fill="none" stroke="#fcfcfc" stroke-width="1.2"/><path d="M5 7 L9 3 M6.5 3 H9 V5.5" fill="none" stroke="#fcfcfc" stroke-width="1.1"/></svg>
<svg style="left:87px;top:563.5px;opacity:1.0;" width="12" height="12" viewBox="0 0 12 12"><path d="M0.5 4 V0.5 H11.5 V11.5 H6" fill="none" stroke="#fcfcfc" stroke-width="1.1"/><path d="M0.5 7.5 h1 M3 7.5 h1 M0.5 10.5 h1 M3 10.5 h1" stroke="#fcfcfc" stroke-width="1.1"/><path d="M9 3 L5.5 6.5 M5.5 4 V6.5 H8" fill="none" stroke="#fcfcfc" stroke-width="1.1"/></svg>
<svg style="left:87px;top:587.5px;opacity:1.0;" width="12" height="12" viewBox="0 0 12 12"><path d="M0.5 0.5 h1 M3 0.5 h1 M0.5 3 v1 M11 7 v1 M8 11 h1 M11 10.5 h1" stroke="#fcfcfc" stroke-width="1.1"/><rect x="0.8" y="7.8" width="3.5" height="3.5" fill="none" stroke="#fcfcfc" stroke-width="1.2"/><path d="M6 2.5 H10.5 M8.5 0.8 L10.5 2.5 L8.5 4.2" fill="none" stroke="#fcfcfc" stroke-width="1.1"/></svg>
<svg style="left:87px;top:611.5px;opacity:1.0;" width="12" height="12" viewBox="0 0 12 12"><path d="M0.5 0.5 h1 M3 0.5 h1 M0.5 3 h1 M3 3 h1" stroke="#fcfcfc" stroke-width="1.1"/><path d="M7 0.5 H11.5 V11.5 H7" fill="none" stroke="#fcfcfc" stroke-width="1.1"/><path d="M6 9 H1.5 M3.5 7.3 L1.5 9 L3.5 10.7" fill="none" stroke="#fcfcfc" stroke-width="1.1"/></svg>
<svg style="left:87px;top:635.5px;opacity:1.0;" width="12" height="12" viewBox="0 0 12 12"><path d="M0.5 0.5 h1 M3 0.5 h1 M0.5 3 v1 M8 11 h1 M11 10.5 h1 M11 7 v1" stroke="#fcfcfc" stroke-width="1.1"/><rect x="0.8" y="7.8" width="3.5" height="3.5" fill="none" stroke="#fcfcfc" stroke-width="1.2"/><path d="M9.5 6 V1.5 M7.8 3.5 L9.5 1.5 L11.2 3.5" fill="none" stroke="#fcfcfc" stroke-width="1.1"/></svg>
<svg style="left:87px;top:659.5px;opacity:1.0;" width="12" height="12" viewBox="0 0 12 12"><path d="M0.5 0.5 h1 M3 0.5 h1 M0.5 3 h1 M3 3 h1" stroke="#fcfcfc" stroke-width="1.1"/><path d="M0.5 6 V11.5 H4 M7.5 0.5 H11.5 V4" fill="none" stroke="#fcfcfc" stroke-width="1.1"/><path d="M9.5 5.5 V10.5 M7.8 8.5 L9.5 10.5 L11.2 8.5" fill="none" stroke="#fcfcfc" stroke-width="1.1"/></svg>
<svg style="left:87px;top:683px;opacity:1.0;" width="12" height="12" viewBox="0 0 12 12"><path d="M4.2 3.5 L6 1 L7.8 3.5 Z" fill="#fcfcfc"/><path d="M4.2 8.5 L6 11 L7.8 8.5 Z" fill="#fcfcfc"/><path d="M8.5 4.2 L11 6 L8.5 7.8 Z" fill="#fcfcfc"/><rect x="5.2" y="5.2" width="1.6" height="1.6" fill="#fcfcfc"/><rect x="2.5" y="5.3" width="1.4" height="1.4" fill="#fcfcfc"/></svg>
<svg style="left:87px;top:707px;opacity:1.0;" width="12" height="12" viewBox="0 0 12 12"><path d="M4.2 3.5 L6 1 L7.8 3.5 Z" fill="#fcfcfc"/><path d="M4.2 8.5 L6 11 L7.8 8.5 Z" fill="#fcfcfc"/><path d="M3.5 4.2 L1 6 L3.5 7.8 Z" fill="#fcfcfc"/><rect x="5.2" y="5.2" width="1.6" height="1.6" fill="#fcfcfc"/></svg>
<svg style="left:87px;top:731px;opacity:1.0;" width="12" height="12" viewBox="0 0 12 12"><path d="M3.5 4.2 L1 6 L3.5 7.8 Z" fill="#fcfcfc"/><path d="M8.5 4.2 L11 6 L8.5 7.8 Z" fill="#fcfcfc"/><path d="M4.2 8.5 L6 11 L7.8 8.5 Z" fill="#fcfcfc"/><rect x="5.2" y="5.2" width="1.6" height="1.6" fill="#fcfcfc"/></svg>
<svg style="left:87px;top:752.5px;opacity:1.0;" width="12" height="12" viewBox="0 0 12 12"><path d="M3.5 4.2 L1 6 L3.5 7.8 Z" fill="#fcfcfc"/><path d="M8.5 4.2 L11 6 L8.5 7.8 Z" fill="#fcfcfc"/><path d="M4.2 3.5 L6 1 L7.8 3.5 Z" fill="#fcfcfc"/><rect x="5.2" y="8.5" width="1.6" height="1.6" fill="#fcfcfc"/></svg>
<div style="position:absolute;left:110px;top:88px;width:316px;height:727px;background:#25282b;border:1px solid #3c4044;border-top:none;border-radius:0 0 3px 3px;"></div>
<div class="t" style="left:114px;top:92.65px;font-size:9.6px;color:#fcfcfc;">Project Explorer</div>
<svg style="left:396px;top:94px;" width="8" height="8" viewBox="0 0 8 8"><path d="M3.7 0.5 L6.9 3.7 L3.7 6.9 L0.5 3.7 Z" fill="none" stroke="#a0a3a6" stroke-width="1"/></svg>
<svg style="left:410px;top:92px;" width="12" height="12" viewBox="0 0 12 12"><circle cx="5.8" cy="5.8" r="5.7" fill="#b3b3b3"/><path d="M3 3 L8.6 8.6 M8.6 3 L3 8.6" stroke="#2a2a2a" stroke-width="0.9"/></svg>
<div style="position:absolute;left:111.5px;top:109.5px;width:291.5px;height:20.5px;background:#1b1e20;border:1px solid #4a4e52;border-radius:3px;"></div>
<div class="t" style="left:117px;top:114.75px;font-size:9.6px;color:#7e8185;">Search/Filter</div>
<svg style="left:409px;top:114px;" width="10" height="9" viewBox="0 0 10 9"><path d="M0.3 2 H9.5 M0.3 7 H9.5" stroke="#fcfcfc" stroke-width="1"/><path d="M6 0.3 L7.8 2 L6 3.7 L4.2 2 Z" fill="#fcfcfc"/><path d="M3.2 5.3 L5 7 L3.2 8.7 L1.4 7 Z" fill="#25282b" stroke="#fcfcfc" stroke-width="0.9"/></svg>
<div style="position:absolute;left:111px;top:132px;width:315px;height:683px;background:#1b1e20;border:1px solid #4f5357;border-right:2px solid #505458;border-radius:3px;"></div>
<div style="position:absolute;left:112px;top:133px;width:312px;height:21px;background:#2e3236;border-bottom:1px solid #4b4f53;border-radius:2px 2px 0 0;"></div>
<div style="position:absolute;left:319.5px;top:133px;width:1px;height:20px;background:#4b4f53;"></div>
<div class="t" style="left:117px;top:137.55px;font-size:9.6px;color:#fcfcfc;">Name</div>
<div class="t" style="left:325px;top:137.55px;font-size:9.6px;color:#fcfcfc;">Type</div>
<svg style="left:130px;top:158px;" width="10" height="10" viewBox="0 0 10 10"><path d="M0.5 8.5 V0.8 H3.5 L4.5 2 H8.5 V8.5 Z" fill="none" stroke="#fcfcfc" stroke-width="1.1"/><rect x="0.5" y="2" width="8" height="1.5" fill="#fcfcfc"/></svg>
<div class="t" style="left:143.7px;top:157.19px;font-size:9.6px;color:#fcfcfc;">Project</div>
<div class="t" style="left:322.8px;top:157.19px;font-size:9.6px;color:#fcfcfc;width:101px;overflow:hidden">Project</div>
<div style="position:absolute;left:140.1px;top:172.28px;width:283.9px;height:18.28px;background:#232629;"></div>
<svg style="left:144px;top:177px;" width="10" height="10" viewBox="0 0 10 10"><rect x="0.5" y="0.5" width="8.5" height="8.5" fill="none" stroke="#fcfcfc" stroke-width="1"/><path d="M3.3 0.5 V9 M6.2 0.5 V9 M0.5 3.3 H9 M0.5 6.2 H9" stroke="#fcfcfc" stroke-width="0.8"/><rect x="0.5" y="0.5" width="2.5" height="2.5" fill="#3daee9"/></svg>
<div class="t" style="left:158.0px;top:175.47px;font-size:9.6px;color:#fcfcfc;">data</div>
<div class="t" style="left:322.8px;top:175.47px;font-size:9.6px;color:#fcfcfc;width:101px;overflow:hidden">Spreadsheet</div>
<svg style="left:158px;top:195px;" width="10" height="10" viewBox="0 0 10 10"><path d="M0.5 0.5 H7.5 M0.5 2.5 H5.5 M0.5 4.5 H7.5 M0.5 6.5 H5.5 M0.5 8.5 H4.5" stroke="#fcfcfc" stroke-width="1"/><rect x="7" y="7.5" width="1.5" height="1.5" fill="#fcfcfc"/></svg>
<div class="t" style="left:172.29999999999998px;top:193.75px;font-size:9.6px;color:#fcfcfc;">t</div>
<div class="t" style="left:322.8px;top:193.75px;font-size:9.6px;color:#fcfcfc;width:101px;overflow:hidden">Column</div>
<div style="position:absolute;left:154.4px;top:208.84px;width:269.6px;height:18.28px;background:#232629;"></div>
<svg style="left:158px;top:213px;" width="10" height="10" viewBox="0 0 10 10"><path d="M0.5 0.5 H7.5 M0.5 2.5 H5.5 M0.5 4.5 H7.5 M0.5 6.5 H5.5 M0.5 8.5 H4.5" stroke="#fcfcfc" stroke-width="1"/><rect x="7" y="7.5" width="1.5" height="1.5" fill="#fcfcfc"/></svg>
<div class="t" style="left:172.29999999999998px;top:212.03px;font-size:9.6px;color:#fcfcfc;">signal</div>
<div class="t" style="left:322.8px;top:212.03px;font-size:9.6px;color:#fcfcfc;width:101px;overflow:hidden">Column</div>
<svg style="left:144px;top:232px;" width="10" height="10" viewBox="0 0 10 10"><path d="M0.5 2 L2 0.5 H9 V4 M0.5 2 V9 H4" fill="none" stroke="#fcfcfc" stroke-width="1"/><path d="M2.5 2.5 V7.5 H9 M2.5 7.5 L5 4.5 L6.5 5.5 L9 3" fill="none" stroke="#fcfcfc" stroke-width="1"/></svg>
<div class="t" style="left:158.0px;top:230.31px;font-size:9.6px;color:#fcfcfc;">Worksheet</div>
<div class="t" style="left:322.8px;top:230.31px;font-size:9.6px;color:#fcfcfc;width:101px;overflow:hidden">Worksheet</div>
<div style="position:absolute;left:154.4px;top:245.4px;width:269.6px;height:18.28px;background:#232629;"></div>
<svg style="left:158px;top:250px;" width="10" height="10" viewBox="0 0 10 10"><path d="M0.5 0 V9 H9.5 M1 8 L4 3 L6 5 L9 1" fill="none" stroke="#fcfcfc" stroke-width="1"/><path d="M1 1.5 L4 1.5" stroke="#fcfcfc" stroke-width="0.8"/></svg>
<div class="t" style="left:172.29999999999998px;top:248.59px;font-size:9.6px;color:#fcfcfc;">Signal with noise</div>
<div class="t" style="left:322.8px;top:248.59px;font-size:9.6px;color:#fcfcfc;width:101px;overflow:hidden">CartesianPlot</div>
<svg style="left:172px;top:268px;" width="10" height="10" viewBox="0 0 10 10"><path d="M1 0.5 V9 H9.5 M4 7.5 V9 M7 7.5 V9" fill="none" stroke="#d8d8d8" stroke-width="1"/></svg>
<div class="t" style="left:186.6px;top:266.87px;font-size:9.6px;color:#fcfcfc;">x</div>
<div class="t" style="left:322.8px;top:266.87px;font-size:9.6px;color:#fcfcfc;width:101px;overflow:hidden">Axis</div>
<div style="position:absolute;left:168.7px;top:281.96000000000004px;width:255.3px;height:18.28px;background:#232629;"></div>
<svg style="left:172px;top:286px;" width="10" height="10" viewBox="0 0 10 10"><path d="M1 0.5 V9 H9.5 M4 7.5 V9 M7 7.5 V9" fill="none" stroke="#d8d8d8" stroke-width="1"/></svg>
<div class="t" style="left:186.6px;top:285.15px;font-size:9.6px;color:#fcfcfc;">x2</div>
<div class="t" style="left:322.8px;top:285.15px;font-size:9.6px;color:#fcfcfc;width:101px;overflow:hidden">Axis</div>
<svg style="left:172px;top:305px;" width="10" height="10" viewBox="0 0 10 10"><path d="M1 0.5 V9 H9.5 M4 7.5 V9 M7 7.5 V9" fill="none" stroke="#d8d8d8" stroke-width="1"/></svg>
<div class="t" style="left:186.6px;top:303.43px;font-size:9.6px;color:#fcfcfc;">y</div>
<div class="t" style="left:322.8px;top:303.43px;font-size:9.6px;color:#fcfcfc;width:101px;overflow:hidden">Axis</div>
<div style="position:absolute;left:168.7px;top:318.52px;width:255.3px;height:18.28px;background:#232629;"></div>
<svg style="left:172px;top:323px;" width="10" height="10" viewBox="0 0 10 10"><path d="M1 0.5 V9 H9.5 M4 7.5 V9 M7 7.5 V9" fill="none" stroke="#d8d8d8" stroke-width="1"/></svg>
<div class="t" style="left:186.6px;top:321.71px;font-size:9.6px;color:#fcfcfc;">y2</div>
<div class="t" style="left:322.8px;top:321.71px;font-size:9.6px;color:#fcfcfc;width:101px;overflow:hidden">Axis</div>
<svg style="left:172px;top:341px;" width="10" height="10" viewBox="0 0 10 10"><path d="M1 0.5 V9 H9.5 M2 1.5 L5 7 Q7 8.5 9.5 8 M8.5 1 L2.5 8" fill="none" stroke="#d8d8d8" stroke-width="1"/></svg>
<div class="t" style="left:186.6px;top:339.99px;font-size:9.6px;color:#fcfcfc;">signal</div>
<div class="t" style="left:322.8px;top:339.99px;font-size:9.6px;color:#fcfcfc;width:101px;overflow:hidden">XYCurve</div>
<div style="position:absolute;left:154.4px;top:355.08000000000004px;width:269.6px;height:18.28px;background:#232629;"></div>
<svg style="left:158px;top:360px;" width="10" height="10" viewBox="0 0 10 10"><path d="M0.5 0 V9 H9.5 M1 8 L4 3 L6 5 L9 1" fill="none" stroke="#fcfcfc" stroke-width="1"/><path d="M1 1.5 L4 1.5" stroke="#fcfcfc" stroke-width="0.8"/></svg>
<div class="t" style="left:172.29999999999998px;top:358.27px;font-size:9.6px;color:#fcfcfc;">FFT</div>
<div class="t" style="left:322.8px;top:358.27px;font-size:9.6px;color:#fcfcfc;width:101px;overflow:hidden">CartesianPlot</div>
<svg style="left:172px;top:378px;" width="10" height="10" viewBox="0 0 10 10"><path d="M1 0.5 V9 H9.5 M4 7.5 V9 M7 7.5 V9" fill="none" stroke="#d8d8d8" stroke-width="1"/></svg>
<div class="t" style="left:186.6px;top:376.55px;font-size:9.6px;color:#fcfcfc;">x</div>
<div class="t" style="left:322.8px;top:376.55px;font-size:9.6px;color:#fcfcfc;width:101px;overflow:hidden">Axis</div>
<div style="position:absolute;left:168.7px;top:391.64px;width:255.3px;height:18.28px;background:#232629;"></div>
<svg style="left:172px;top:396px;" width="10" height="10" viewBox="0 0 10 10"><path d="M1 0.5 V9 H9.5 M4 7.5 V9 M7 7.5 V9" fill="none" stroke="#d8d8d8" stroke-width="1"/></svg>
<div class="t" style="left:186.6px;top:394.83px;font-size:9.6px;color:#fcfcfc;">x2</div>
<div class="t" style="left:322.8px;top:394.83px;font-size:9.6px;color:#fcfcfc;width:101px;overflow:hidden">Axis</div>
<svg style="left:172px;top:414px;" width="10" height="10" viewBox="0 0 10 10"><path d="M1 0.5 V9 H9.5 M4 7.5 V9 M7 7.5 V9" fill="none" stroke="#d8d8d8" stroke-width="1"/></svg>
<div class="t" style="left:186.6px;top:413.11px;font-size:9.6px;color:#fcfcfc;">y</div>
<div class="t" style="left:322.8px;top:413.11px;font-size:9.6px;color:#fcfcfc;width:101px;overflow:hidden">Axis</div>
<div style="position:absolute;left:168.7px;top:428.20000000000005px;width:255.3px;height:18.28px;background:#232629;"></div>
<svg style="left:172px;top:433px;" width="10" height="10" viewBox="0 0 10 10"><path d="M1 0.5 V9 H9.5 M4 7.5 V9 M7 7.5 V9" fill="none" stroke="#d8d8d8" stroke-width="1"/></svg>
<div class="t" style="left:186.6px;top:431.39px;font-size:9.6px;color:#fcfcfc;">y2</div>
<div class="t" style="left:322.8px;top:431.39px;font-size:9.6px;color:#fcfcfc;width:101px;overflow:hidden">Axis</div>
<div style="position:absolute;left:168.7px;top:446.48px;width:255.3px;height:18.28px;background:#1d4a5e;"></div>
<svg style="left:172px;top:451px;" width="10" height="10" viewBox="0 0 10 10"><path d="M0.5 9 V0.5 H4 V4 M0.5 4.5 H3" fill="none" stroke="#fcfcfc" stroke-width="1.1"/><path d="M4.5 9 V5 H6.5 V8 H9 V5.5" fill="none" stroke="#fcfcfc" stroke-width="1"/></svg>
<div class="t" style="left:186.6px;top:449.67px;font-size:9.6px;color:#fcfcfc;">Fourier transform</div>
<div class="t" style="left:322.8px;top:449.67px;font-size:9.6px;color:#fcfcfc;width:101px;overflow:hidden">XYFourierTransformCurve</div>
<div style="position:absolute;left:154.4px;top:464.76px;width:269.6px;height:18.28px;background:#232629;"></div>
<svg style="left:158px;top:469px;" width="10" height="10" viewBox="0 0 10 10"><path d="M0.5 0 V9 H9.5 M1 8 L4 3 L6 5 L9 1" fill="none" stroke="#fcfcfc" stroke-width="1"/><path d="M1 1.5 L4 1.5" stroke="#fcfcfc" stroke-width="0.8"/></svg>
<div class="t" style="left:172.29999999999998px;top:467.95px;font-size:9.6px;color:#fcfcfc;">Signal after Fourier Filter</div>
<div class="t" style="left:322.8px;top:467.95px;font-size:9.6px;color:#fcfcfc;width:101px;overflow:hidden">CartesianPlot</div>
<svg style="left:172px;top:487px;" width="10" height="10" viewBox="0 0 10 10"><path d="M1 0.5 V9 H9.5 M4 7.5 V9 M7 7.5 V9" fill="none" stroke="#d8d8d8" stroke-width="1"/></svg>
<div class="t" style="left:186.6px;top:486.23px;font-size:9.6px;color:#fcfcfc;">x</div>
<div class="t" style="left:322.8px;top:486.23px;font-size:9.6px;color:#fcfcfc;width:101px;overflow:hidden">Axis</div>
<div style="position:absolute;left:168.7px;top:501.32000000000005px;width:255.3px;height:18.28px;background:#232629;"></div>
<svg style="left:172px;top:506px;" width="10" height="10" viewBox="0 0 10 10"><path d="M1 0.5 V9 H9.5 M4 7.5 V9 M7 7.5 V9" fill="none" stroke="#d8d8d8" stroke-width="1"/></svg>
<div class="t" style="left:186.6px;top:504.51px;font-size:9.6px;color:#fcfcfc;">x2</div>
<div class="t" style="left:322.8px;top:504.51px;font-size:9.6px;color:#fcfcfc;width:101px;overflow:hidden">Axis</div>
<svg style="left:172px;top:524px;" width="10" height="10" viewBox="0 0 10 10"><path d="M1 0.5 V9 H9.5 M4 7.5 V9 M7 7.5 V9" fill="none" stroke="#d8d8d8" stroke-width="1"/></svg>
<div class="t" style="left:186.6px;top:522.79px;font-size:9.6px;color:#fcfcfc;">y</div>
<div class="t" style="left:322.8px;top:522.79px;font-size:9.6px;color:#fcfcfc;width:101px;overflow:hidden">Axis</div>
<div style="position:absolute;left:168.7px;top:537.88px;width:255.3px;height:18.28px;background:#232629;"></div>
<svg style="left:172px;top:542px;" width="10" height="10" viewBox="0 0 10 10"><path d="M1 0.5 V9 H9.5 M4 7.5 V9 M7 7.5 V9" fill="none" stroke="#d8d8d8" stroke-width="1"/></svg>
<div class="t" style="left:186.6px;top:541.07px;font-size:9.6px;color:#fcfcfc;">y2</div>
<div class="t" style="left:322.8px;top:541.07px;font-size:9.6px;color:#fcfcfc;width:101px;overflow:hidden">Axis</div>
<svg style="left:172px;top:561px;" width="10" height="10" viewBox="0 0 10 10"><path d="M0 1 h2 M0 1 v1.5 M7 1 h2 M9 1 v1.5 M0 8.5 h2 M0 8.5 v-1.5 M7 8.5 h2 M9 8.5 v-1.5" fill="none" stroke="#c8c8c8" stroke-width="1.2"/><path d="M2.3 6.8 Q4.5 -0.5 6.7 6.8" fill="none" stroke="#5fb8ec" stroke-width="1.2"/><path d="M4.5 4.5 V9" stroke="#c8c8c8" stroke-width="1"/></svg>
<div class="t" style="left:186.6px;top:559.35px;font-size:9.6px;color:#fcfcfc;">Fourier filter</div>
<div class="t" style="left:322.8px;top:559.35px;font-size:9.6px;color:#fcfcfc;width:101px;overflow:hidden">XYFourierFilterCurve</div>
<div style="position:absolute;left:154.4px;top:574.44px;width:269.6px;height:18.28px;background:#232629;"></div>
<svg style="left:158px;top:579px;" width="10" height="10" viewBox="0 0 10 10"><rect x="1" y="1" width="7.5" height="7.5" fill="none" stroke="#fcfcfc" stroke-width="1"/><path d="M2.8 3 H6.7 M4.75 3 V7" stroke="#fcfcfc" stroke-width="1.5"/><path d="M0 0 h2 v2 h-2z M7.5 0 h2 v2 h-2z M0 7.5 h2 v2 h-2z M7.5 7.5 h2 v2 h-2z" fill="#fcfcfc"/></svg>
<div class="t" style="left:172.29999999999998px;top:577.63px;font-size:9.6px;color:#fcfcfc;">Signal Info</div>
<div class="t" style="left:322.8px;top:577.63px;font-size:9.6px;color:#fcfcfc;width:101px;overflow:hidden">TextLabel</div>
<svg style="left:158px;top:597px;" width="10" height="10" viewBox="0 0 10 10"><rect x="1" y="1" width="7.5" height="7.5" fill="none" stroke="#fcfcfc" stroke-width="1"/><path d="M2.8 3 H6.7 M4.75 3 V7" stroke="#fcfcfc" stroke-width="1.5"/><path d="M0 0 h2 v2 h-2z M7.5 0 h2 v2 h-2z M0 7.5 h2 v2 h-2z M7.5 7.5 h2 v2 h-2z" fill="#fcfcfc"/></svg>
<div class="t" style="left:172.29999999999998px;top:595.91px;font-size:9.6px;color:#fcfcfc;">FFT Info</div>
<div class="t" style="left:322.8px;top:595.91px;font-size:9.6px;color:#fcfcfc;width:101px;overflow:hidden">TextLabel</div>
<div style="position:absolute;left:154.4px;top:611.0px;width:269.6px;height:18.28px;background:#232629;"></div>
<svg style="left:158px;top:615px;" width="10" height="10" viewBox="0 0 10 10"><rect x="1" y="1" width="7.5" height="7.5" fill="none" stroke="#fcfcfc" stroke-width="1"/><path d="M2.8 3 H6.7 M4.75 3 V7" stroke="#fcfcfc" stroke-width="1.5"/><path d="M0 0 h2 v2 h-2z M7.5 0 h2 v2 h-2z M0 7.5 h2 v2 h-2z M7.5 7.5 h2 v2 h-2z" fill="#fcfcfc"/></svg>
<div class="t" style="left:172.29999999999998px;top:614.19px;font-size:9.6px;color:#fcfcfc;">Fourier Filter Info</div>
<div class="t" style="left:322.8px;top:614.19px;font-size:9.6px;color:#fcfcfc;width:101px;overflow:hidden">TextLabel</div>
<svg style="left:114.1px;top:160.64px;" width="9" height="5" viewBox="0 0 9 5"><path d="M0.5 0.5 L4.2 4.2 L7.9 0.5" fill="none" stroke="#d0d0d0" stroke-width="1"/></svg>
<svg style="left:128.4px;top:178.92000000000002px;" width="9" height="5" viewBox="0 0 9 5"><path d="M0.5 0.5 L4.2 4.2 L7.9 0.5" fill="none" stroke="#d0d0d0" stroke-width="1"/></svg>
<div style="position:absolute;left:146.9px;top:199.7px;width:6px;height:1px;background:#4a4e52;"></div>
<div style="position:absolute;left:146.9px;top:217.98000000000002px;width:6px;height:1px;background:#4a4e52;"></div>
<svg style="left:128.4px;top:233.76px;" width="9" height="5" viewBox="0 0 9 5"><path d="M0.5 0.5 L4.2 4.2 L7.9 0.5" fill="none" stroke="#d0d0d0" stroke-width="1"/></svg>
<svg style="left:142.70000000000002px;top:252.04000000000002px;" width="9" height="5" viewBox="0 0 9 5"><path d="M0.5 0.5 L4.2 4.2 L7.9 0.5" fill="none" stroke="#d0d0d0" stroke-width="1"/></svg>
<div style="position:absolute;left:161.2px;top:272.82px;width:6px;height:1px;background:#4a4e52;"></div>
<div style="position:absolute;left:161.2px;top:291.1px;width:6px;height:1px;background:#4a4e52;"></div>
<div style="position:absolute;left:161.2px;top:309.38px;width:6px;height:1px;background:#4a4e52;"></div>
<div style="position:absolute;left:161.2px;top:327.65999999999997px;width:6px;height:1px;background:#4a4e52;"></div>
<div style="position:absolute;left:161.2px;top:345.94px;width:6px;height:1px;background:#4a4e52;"></div>
<svg style="left:142.70000000000002px;top:361.72px;" width="9" height="5" viewBox="0 0 9 5"><path d="M0.5 0.5 L4.2 4.2 L7.9 0.5" fill="none" stroke="#d0d0d0" stroke-width="1"/></svg>
<div style="position:absolute;left:161.2px;top:382.5px;width:6px;height:1px;background:#4a4e52;"></div>
<div style="position:absolute;left:161.2px;top:400.78px;width:6px;height:1px;background:#4a4e52;"></div>
<div style="position:absolute;left:161.2px;top:419.06px;width:6px;height:1px;background:#4a4e52;"></div>
<div style="position:absolute;left:161.2px;top:437.34000000000003px;width:6px;height:1px;background:#4a4e52;"></div>
<div style="position:absolute;left:161.2px;top:455.62px;width:6px;height:1px;background:#4a4e52;"></div>
<svg style="left:142.70000000000002px;top:471.4px;" width="9" height="5" viewBox="0 0 9 5"><path d="M0.5 0.5 L4.2 4.2 L7.9 0.5" fill="none" stroke="#d0d0d0" stroke-width="1"/></svg>
<div style="position:absolute;left:161.2px;top:492.18px;width:6px;height:1px;background:#4a4e52;"></div>
<div style="position:absolute;left:161.2px;top:510.46000000000004px;width:6px;height:1px;background:#4a4e52;"></div>
<div style="position:absolute;left:161.2px;top:528.74px;width:6px;height:1px;background:#4a4e52;"></div>
<div style="position:absolute;left:161.2px;top:547.02px;width:6px;height:1px;background:#4a4e52;"></div>
<div style="position:absolute;left:161.2px;top:565.3000000000001px;width:6px;height:1px;background:#4a4e52;"></div>
<div style="position:absolute;left:146.9px;top:583.58px;width:6px;height:1px;background:#4a4e52;"></div>
<div style="position:absolute;left:146.9px;top:601.86px;width:6px;height:1px;background:#4a4e52;"></div>
<div style="position:absolute;left:146.9px;top:620.14px;width:6px;height:1px;background:#4a4e52;"></div>
<div style="position:absolute;left:132.6px;top:167.14px;width:1px;height:64.12px;background:#4a4e52;"></div>
<div style="position:absolute;left:146.9px;top:185.42000000000002px;width:1px;height:32.56px;background:#4a4e52;"></div>
<div style="position:absolute;left:146.9px;top:240.26px;width:1px;height:379.88px;background:#4a4e52;"></div>
<div style="position:absolute;left:161.2px;top:258.54px;width:1px;height:87.39999999999998px;background:#4a4e52;"></div>
<div style="position:absolute;left:161.2px;top:368.22px;width:1px;height:87.39999999999998px;background:#4a4e52;"></div>
<div style="position:absolute;left:161.2px;top:477.9px;width:1px;height:87.40000000000009px;background:#4a4e52;"></div>
<div style="position:absolute;left:118.3px;top:154px;width:1px;height:5px;background:#4a4e52;"></div>
<div style="position:absolute;left:112px;top:799px;width:312px;height:1px;background:#3a3e42;"></div>
<div style="position:absolute;left:116px;top:803px;width:45px;height:7px;background:#4f5356;border:1px solid #77797c;border-radius:4px;"></div>
<div style="position:absolute;left:428px;top:88.5px;width:697px;height:727px;background:#2a2e32;border:1.3px solid #3daee9;border-radius:3px;"></div>
<div style="position:absolute;left:451px;top:126px;width:650px;height:650.5px;background:#ffffff;box-shadow:1px 1px 0 #0e0f10,-1px -1px 0 #202326;"></div>
<svg style="left:0px;top:0px;pointer-events:none;" width="1504" height="846" viewBox="0 0 1504 846"><rect x="463.5" y="139.5" width="286" height="199" fill="#fff" stroke="#8c8c8c" stroke-width="1"/><rect x="463.5" y="352" width="286" height="199" fill="#fff" stroke="#8c8c8c" stroke-width="1"/><rect x="463.5" y="564.5" width="286" height="199" fill="#fff" stroke="#8c8c8c" stroke-width="1"/><path d="M502.5 178.3 V299.8" stroke="#e6e6e6" stroke-width="1"/><path d="M528.5625 178.3 V299.8" stroke="#d0d0d0" stroke-width="0.8" stroke-dasharray="1 2"/><path d="M554.625 178.3 V299.8" stroke="#e6e6e6" stroke-width="1"/><path d="M580.6875 178.3 V299.8" stroke="#d0d0d0" stroke-width="0.8" stroke-dasharray="1 2"/><path d="M606.75 178.3 V299.8" stroke="#e6e6e6" stroke-width="1"/><path d="M632.8125 178.3 V299.8" stroke="#d0d0d0" stroke-width="0.8" stroke-dasharray="1 2"/><path d="M658.875 178.3 V299.8" stroke="#e6e6e6" stroke-width="1"/><path d="M684.9375 178.3 V299.8" stroke="#d0d0d0" stroke-width="0.8" stroke-dasharray="1 2"/><path d="M711.0 178.3 V299.8" stroke="#e6e6e6" stroke-width="1"/><path d="M502.5 178.3 H711" stroke="#e6e6e6" stroke-width="1"/><path d="M502.5 193.4875 H711" stroke="#d0d0d0" stroke-width="0.8" stroke-dasharray="1 2"/><path d="M502.5 208.675 H711" stroke="#e6e6e6" stroke-width="1"/><path d="M502.5 223.8625 H711" stroke="#d0d0d0" stroke-width="0.8" stroke-dasharray="1 2"/><path d="M502.5 239.05 H711" stroke="#e6e6e6" stroke-width="1"/><path d="M502.5 254.2375 H711" stroke="#d0d0d0" stroke-width="0.8" stroke-dasharray="1 2"/><path d="M502.5 269.425 H711" stroke="#e6e6e6" stroke-width="1"/><path d="M502.5 284.6125 H711" stroke="#d0d0d0" stroke-width="0.8" stroke-dasharray="1 2"/><path d="M502.5 299.8 H711" stroke="#e6e6e6" stroke-width="1"/><rect x="502.5" y="210.19375000000002" width="198.07500000000005" height="57.71249999999998" fill="#0000ff"/><path d="M502.50 207.3V273.9M503.05 193.4V282.9M503.60 204.7V272.6M504.15 204.2V273.8M504.70 209.8V288.8M505.25 206.8V274.0M505.80 205.2V269.6M506.35 200.2V275.4M506.90 208.0V268.1M507.45 209.4V272.8M508.00 206.1V277.0M508.55 206.7V268.6M509.10 212.0V275.1M509.65 200.6V273.3M510.20 203.8V269.4M510.75 210.1V269.8M511.30 190.4V272.8M511.85 198.9V271.5M512.40 206.7V271.1M512.95 205.2V272.8M513.50 206.2V275.8M514.05 211.0V273.4M514.60 204.2V269.4M515.15 198.8V265.2M515.70 205.9V274.7M516.25 206.3V272.2M516.80 215.2V267.9M517.35 187.4V267.9M517.90 201.3V266.8M518.45 200.1V275.2M519.00 201.1V274.9M519.55 187.8V274.1M520.10 204.5V274.3M520.65 200.7V277.2M521.20 207.9V272.0M521.75 206.9V290.0M522.30 208.4V284.2M522.85 198.4V270.8M523.40 207.8V273.6M523.95 205.6V268.4M524.50 198.6V271.1M525.05 206.4V269.0M525.60 205.3V272.0M526.15 209.7V262.6M526.70 196.4V271.1M527.25 205.9V274.4M527.80 200.1V267.4M528.35 205.7V270.3M528.90 204.9V265.4M529.45 205.4V268.4M530.00 209.4V274.3M530.55 205.3V273.7M531.10 205.5V269.8M531.65 208.3V268.8M532.20 195.8V272.8M532.75 202.4V270.1M533.30 205.5V274.8M533.85 208.9V270.3M534.40 203.1V269.9M534.95 202.8V269.5M535.50 194.4V270.9M536.05 199.2V272.0M536.60 207.0V266.9M537.15 212.7V269.5M537.70 206.2V275.0M538.25 212.4V269.3M538.80 209.8V268.8M539.35 210.9V273.3M539.90 208.8V264.2M540.45 215.1V268.4M541.00 203.2V274.8M541.55 201.0V274.5M542.10 202.7V277.0M542.65 198.6V264.9M543.20 209.9V274.6M543.75 204.0V275.4M544.30 205.1V284.6M544.85 206.9V272.1M545.40 207.7V271.7M545.95 204.4V287.7M546.50 206.5V273.9M547.05 205.0V269.1M547.60 211.8V286.4M548.15 207.6V272.5M548.70 205.7V288.8M549.25 209.7V272.9M549.80 206.5V273.9M550.35 198.0V273.3M550.90 208.5V278.1M551.45 197.3V287.0M552.00 208.7V271.0M552.55 200.5V276.4M553.10 204.2V268.5M553.65 202.6V271.5M554.20 208.9V278.8M554.75 200.4V274.6M555.30 199.7V275.7M555.85 206.8V274.7M556.40 203.9V275.4M556.95 201.3V271.0M557.50 195.3V275.3M558.05 208.9V280.6M558.60 200.7V274.0M559.15 205.7V277.1M559.70 209.7V266.6M560.25 211.5V282.0M560.80 207.0V270.9M561.35 210.7V267.2M561.90 210.9V271.2M562.45 203.8V267.2M563.00 199.1V269.2M563.55 200.3V276.5M564.10 210.4V287.9M564.65 206.3V267.2M565.20 200.3V274.5M565.75 206.9V278.2M566.30 201.7V271.2M566.85 209.0V265.7M567.40 204.3V272.9M567.95 200.2V276.7M568.50 209.1V266.5M569.05 210.6V271.4M569.60 204.2V270.2M570.15 201.9V272.3M570.70 209.2V272.8M571.25 205.0V276.9M571.80 204.2V271.2M572.35 201.6V267.8M572.90 193.6V271.9M573.45 206.9V273.9M574.00 206.1V271.7M574.55 199.7V278.0M575.10 207.2V275.5M575.65 209.4V269.9M576.20 204.5V272.4M576.75 203.5V270.7M577.30 204.8V275.4M577.85 204.1V266.7M578.40 190.0V269.9M578.95 206.1V289.7M579.50 203.1V275.1M580.05 207.0V261.1M580.60 207.8V276.6M581.15 204.8V274.1M581.70 204.6V280.3M582.25 204.6V273.8M582.80 203.8V273.4M583.35 201.3V267.6M583.90 210.0V280.8M584.45 204.2V271.4M585.00 204.5V269.8M585.55 209.7V274.4M586.10 190.3V271.3M586.65 195.1V272.7M587.20 202.7V264.9M587.75 204.5V273.3M588.30 200.4V269.6M588.85 189.2V273.2M589.40 201.3V269.1M589.95 206.3V277.5M590.50 201.9V273.9M591.05 196.5V277.1M591.60 200.8V270.4M592.15 206.0V274.8M592.70 206.5V272.6M593.25 208.9V273.3M593.80 206.1V272.9M594.35 207.3V269.5M594.90 208.9V271.8M595.45 205.0V269.3M596.00 209.0V281.2M596.55 205.6V275.9M597.10 203.9V275.0M597.65 195.1V272.9M598.20 201.5V267.6M598.75 207.5V274.1M599.30 200.5V273.0M599.85 196.8V273.9M600.40 204.3V271.3M600.95 210.8V277.6M601.50 202.0V273.2M602.05 204.9V282.6M602.60 200.6V289.6M603.15 206.5V278.4M603.70 207.6V281.7M604.25 207.0V287.3M604.80 201.4V280.2M605.35 216.0V273.4M605.90 206.3V276.0M606.45 203.3V278.3M607.00 205.5V266.5M607.55 210.7V277.1M608.10 200.6V268.9M608.65 211.3V281.7M609.20 206.4V273.5M609.75 207.3V267.7M610.30 210.5V267.8M610.85 207.3V270.1M611.40 209.7V270.3M611.95 206.2V274.8M612.50 209.3V270.2M613.05 209.1V271.7M613.60 204.4V271.8M614.15 196.6V264.5M614.70 202.3V281.7M615.25 211.7V277.6M615.80 204.6V262.5M616.35 208.3V270.0M616.90 205.4V274.8M617.45 206.1V272.4M618.00 204.9V275.0M618.55 207.6V271.4M619.10 211.6V270.1M619.65 207.6V268.0M620.20 203.0V270.9M620.75 213.1V275.8M621.30 204.2V289.3M621.85 212.7V275.2M622.40 192.7V272.4M622.95 204.8V270.9M623.50 208.5V271.8M624.05 204.6V271.0M624.60 203.7V271.3M625.15 187.0V271.2M625.70 201.7V268.7M626.25 205.6V269.1M626.80 205.0V269.6M627.35 210.1V271.4M627.90 192.5V263.5M628.45 198.9V273.6M629.00 211.5V270.1M629.55 209.9V269.8M630.10 207.0V272.2M630.65 205.6V278.5M631.20 204.3V275.9M631.75 207.8V272.6M632.30 200.8V273.3M632.85 193.4V267.2M633.40 204.2V271.2M633.95 207.1V264.6M634.50 216.1V272.4M635.05 195.8V263.0M635.60 201.7V278.9M636.15 203.4V275.5M636.70 206.6V279.5M637.25 201.3V279.7M637.80 202.9V277.9M638.35 208.7V269.0M638.90 213.4V267.9M639.45 209.0V269.0M640.00 201.1V271.5M640.55 208.5V288.2M641.10 206.4V277.5M641.65 200.6V268.9M642.20 209.4V269.1M642.75 204.3V277.1M643.30 207.4V273.3M643.85 210.8V269.2M644.40 208.3V272.2M644.95 205.2V273.3M645.50 205.4V285.8M646.05 209.6V270.5M646.60 200.3V269.4M647.15 201.6V273.2M647.70 192.7V274.3M648.25 204.6V273.9M648.80 210.8V266.2M649.35 206.6V273.0M649.90 206.3V271.4M650.45 212.6V273.3M651.00 196.0V273.6M651.55 208.8V264.7M652.10 210.2V270.5M652.65 206.8V277.5M653.20 205.7V271.4M653.75 206.6V262.4M654.30 203.7V269.4M654.85 210.4V267.4M655.40 213.7V273.3M655.95 212.1V274.3M656.50 204.9V277.2M657.05 205.7V272.6M657.60 200.4V273.7M658.15 210.3V285.1M658.70 211.0V277.4M659.25 199.0V275.1M659.80 204.1V288.6M660.35 204.1V266.7M660.90 206.7V273.6M661.45 205.3V280.5M662.00 207.5V278.0M662.55 201.7V270.8M663.10 202.2V272.6M663.65 209.8V276.9M664.20 205.1V270.5M664.75 203.6V271.9M665.30 201.7V272.0M665.85 204.4V276.1M666.40 206.9V281.3M666.95 207.7V267.4M667.50 200.2V275.2M668.05 208.8V269.2M668.60 205.0V279.8M669.15 206.9V280.3M669.70 204.1V269.9M670.25 206.1V265.3M670.80 207.3V273.9M671.35 206.4V269.5M671.90 208.0V270.9M672.45 206.1V274.4M673.00 205.0V270.0M673.55 208.5V276.1M674.10 202.2V281.8M674.65 204.5V271.4M675.20 204.5V265.7M675.75 207.5V270.4M676.30 202.4V272.7M676.85 211.8V271.8M677.40 209.4V269.4M677.95 210.9V274.1M678.50 205.4V278.1M679.05 208.6V264.5M679.60 209.5V272.8M680.15 212.3V275.2M680.70 206.2V276.0M681.25 211.2V275.0M681.80 210.1V266.2M682.35 205.2V271.7M682.90 204.4V262.7M683.45 210.6V269.6M684.00 211.0V266.2M684.55 203.7V271.0M685.10 206.1V269.8M685.65 203.3V282.7M686.20 211.6V274.8M686.75 205.2V278.3M687.30 204.9V278.8M687.85 201.5V276.8M688.40 211.2V272.8M688.95 209.6V276.3M689.50 209.5V272.5M690.05 204.4V268.7M690.60 208.4V274.0M691.15 199.9V272.0M691.70 207.7V276.1M692.25 208.3V268.7M692.80 199.3V274.5M693.35 201.5V277.2M693.90 200.7V270.1M694.45 204.4V274.1M695.00 201.3V278.9M695.55 202.1V268.4M696.10 200.8V267.6M696.65 208.0V267.3M697.20 202.5V268.5M697.75 194.0V275.4M698.30 210.9V272.1M698.85 198.7V272.2M699.40 210.1V265.3M699.95 204.7V271.5M700.50 200.9V272.8" stroke="#0000ff" stroke-width="1" fill="none"/><rect x="502.5" y="178.3" width="208.5" height="121.5" fill="none" stroke="#5c5c5c" stroke-width="1.3"/><path d="M502.5 299.8 v-5 M502.5 178.3 v5" stroke="#4a4a4a" stroke-width="1"/><path d="M528.5625 299.8 v-3 M528.5625 178.3 v3" stroke="#4a4a4a" stroke-width="1"/><path d="M554.625 299.8 v-5 M554.625 178.3 v5" stroke="#4a4a4a" stroke-width="1"/><path d="M580.6875 299.8 v-3 M580.6875 178.3 v3" stroke="#4a4a4a" stroke-width="1"/><path d="M606.75 299.8 v-5 M606.75 178.3 v5" stroke="#4a4a4a" stroke-width="1"/><path d="M632.8125 299.8 v-3 M632.8125 178.3 v3" stroke="#4a4a4a" stroke-width="1"/><path d="M658.875 299.8 v-5 M658.875 178.3 v5" stroke="#4a4a4a" stroke-width="1"/><path d="M684.9375 299.8 v-3 M684.9375 178.3 v3" stroke="#4a4a4a" stroke-width="1"/><path d="M711.0 299.8 v-5 M711.0 178.3 v5" stroke="#4a4a4a" stroke-width="1"/><path d="M502.5 178.3 h5 M711 178.3 h-5" stroke="#4a4a4a" stroke-width="1"/><path d="M502.5 193.4875 h3 M711 193.4875 h-3" stroke="#4a4a4a" stroke-width="1"/><path d="M502.5 208.675 h5 M711 208.675 h-5" stroke="#4a4a4a" stroke-width="1"/><path d="M502.5 223.8625 h3 M711 223.8625 h-3" stroke="#4a4a4a" stroke-width="1"/><path d="M502.5 239.05 h5 M711 239.05 h-5" stroke="#4a4a4a" stroke-width="1"/><path d="M502.5 254.2375 h3 M711 254.2375 h-3" stroke="#4a4a4a" stroke-width="1"/><path d="M502.5 269.425 h5 M711 269.425 h-5" stroke="#4a4a4a" stroke-width="1"/><path d="M502.5 284.6125 h3 M711 284.6125 h-3" stroke="#4a4a4a" stroke-width="1"/><path d="M502.5 299.8 h5 M711 299.8 h-5" stroke="#4a4a4a" stroke-width="1"/><text x="606.5" y="152.0" font-size="12.6" text-anchor="middle" fill="#555555" font-family="Liberation Sans" dominant-baseline="central">Signal with white noise</text><text x="498" y="179.8" font-size="9" text-anchor="end" fill="#555555" font-family="Liberation Sans" dominant-baseline="central">20</text><text x="498" y="210.175" font-size="9" text-anchor="end" fill="#555555" font-family="Liberation Sans" dominant-baseline="central">10</text><text x="498" y="240.55" font-size="9" text-anchor="end" fill="#555555" font-family="Liberation Sans" dominant-baseline="central">0</text><text x="498" y="270.925" font-size="9" text-anchor="end" fill="#555555" font-family="Liberation Sans" dominant-baseline="central">-10</text><text x="498" y="301.3" font-size="9" text-anchor="end" fill="#555555" font-family="Liberation Sans" dominant-baseline="central">-20</text><text x="502.5" y="312.6" font-size="9" text-anchor="middle" fill="#555555" font-family="Liberation Sans" dominant-baseline="central">0</text><text x="554.625" y="312.6" font-size="9" text-anchor="middle" fill="#555555" font-family="Liberation Sans" dominant-baseline="central">2</text><text x="606.75" y="312.6" font-size="9" text-anchor="middle" fill="#555555" font-family="Liberation Sans" dominant-baseline="central">4</text><text x="658.875" y="312.6" font-size="9" text-anchor="middle" fill="#555555" font-family="Liberation Sans" dominant-baseline="central">6</text><text x="711.0" y="312.6" font-size="9" text-anchor="middle" fill="#555555" font-family="Liberation Sans" dominant-baseline="central">8</text><text x="475" y="239.05" font-size="12.6" text-anchor="middle" fill="#555555" font-family="Liberation Sans" transform="rotate(-90 475 239.05)" dominant-baseline="central">signal</text><text x="608" y="330.5" font-size="12.6" text-anchor="middle" fill="#555555" font-family="Liberation Sans" dominant-baseline="central">t</text><text x="692" y="326.5" font-size="9" text-anchor="middle" fill="#555555" font-family="Liberation Sans" dominant-baseline="central">×10000</text><path d="M502.5 390.8 V512.3" stroke="#e6e6e6" stroke-width="1"/><path d="M523.35 390.8 V512.3" stroke="#d0d0d0" stroke-width="0.8" stroke-dasharray="1 2"/><path d="M544.2 390.8 V512.3" stroke="#e6e6e6" stroke-width="1"/><path d="M565.05 390.8 V512.3" stroke="#d0d0d0" stroke-width="0.8" stroke-dasharray="1 2"/><path d="M585.9 390.8 V512.3" stroke="#e6e6e6" stroke-width="1"/><path d="M606.75 390.8 V512.3" stroke="#d0d0d0" stroke-width="0.8" stroke-dasharray="1 2"/><path d="M627.6 390.8 V512.3" stroke="#e6e6e6" stroke-width="1"/><path d="M648.45 390.8 V512.3" stroke="#d0d0d0" stroke-width="0.8" stroke-dasharray="1 2"/><path d="M669.3 390.8 V512.3" stroke="#e6e6e6" stroke-width="1"/><path d="M690.15 390.8 V512.3" stroke="#d0d0d0" stroke-width="0.8" stroke-dasharray="1 2"/><path d="M711.0 390.8 V512.3" stroke="#e6e6e6" stroke-width="1"/><path d="M502.5 390.8 H711" stroke="#e6e6e6" stroke-width="1"/><path d="M502.5 411.05 H711" stroke="#d0d0d0" stroke-width="0.8" stroke-dasharray="1 2"/><path d="M502.5 431.3 H711" stroke="#e6e6e6" stroke-width="1"/><path d="M502.5 451.54999999999995 H711" stroke="#d0d0d0" stroke-width="0.8" stroke-dasharray="1 2"/><path d="M502.5 471.79999999999995 H711" stroke="#e6e6e6" stroke-width="1"/><path d="M502.5 492.04999999999995 H711" stroke="#d0d0d0" stroke-width="0.8" stroke-dasharray="1 2"/><path d="M502.5 512.3 H711" stroke="#e6e6e6" stroke-width="1"/><path d="M523.35 498.125 V402.95" stroke="#4a3f78" stroke-width="1.3"/><polygon points="502.5 512.3 502.50 500.0 503.20 496.5 503.90 498.5 504.60 498.9 505.30 499.7 506.00 497.2 506.70 500.3 507.40 499.0 508.10 499.8 508.80 498.2 509.50 498.3 510.20 499.6 510.90 501.2 511.60 498.8 512.30 499.1 513.00 498.0 513.70 495.1 514.40 499.9 515.10 499.0 515.80 497.0 516.50 497.6 517.20 499.3 517.90 497.7 518.60 499.4 519.30 499.1 520.00 499.9 520.70 499.2 521.40 499.6 522.10 498.6 522.80 498.5 523.50 499.2 524.20 499.5 524.90 499.4 525.60 499.0 526.30 499.1 527.00 497.9 527.70 497.3 528.40 498.3 529.10 500.5 529.80 496.3 530.50 500.5 531.20 499.9 531.90 499.1 532.60 498.5 533.30 495.2 534.00 498.6 534.70 498.3 535.40 498.8 536.10 497.3 536.80 498.6 537.50 498.6 538.20 498.5 538.90 497.8 539.60 499.9 540.30 499.0 541.00 499.7 541.70 497.7 542.40 499.1 543.10 498.6 543.80 499.1 544.50 497.8 545.20 496.4 545.90 499.6 546.60 499.2 547.30 498.5 548.00 499.6 548.70 499.5 549.40 498.3 550.10 498.5 550.80 494.2 551.50 499.2 552.20 500.4 552.90 497.0 553.60 499.0 554.30 500.5 555.00 497.9 555.70 500.3 556.40 499.9 557.10 498.0 557.80 498.7 558.50 494.7 559.20 500.5 559.90 497.9 560.60 499.6 561.30 498.2 562.00 500.0 562.70 497.7 563.40 498.1 564.10 498.7 564.80 500.8 565.50 499.2 566.20 499.6 566.90 498.7 567.60 500.3 568.30 498.2 569.00 500.2 569.70 497.2 570.40 499.9 571.10 499.2 571.80 499.0 572.50 499.0 573.20 499.6 573.90 494.1 574.60 498.8 575.30 497.7 576.00 497.9 576.70 499.4 577.40 497.6 578.10 496.9 578.80 498.8 579.50 498.8 580.20 497.2 580.90 498.6 581.60 500.4 582.30 498.1 583.00 498.6 583.70 497.6 584.40 498.4 585.10 495.5 585.80 499.4 586.50 497.1 587.20 497.2 587.90 500.2 588.60 500.5 589.30 499.2 590.00 498.6 590.70 498.7 591.40 498.5 592.10 497.1 592.80 494.9 593.50 499.1 594.20 497.2 594.90 498.7 595.60 500.9 596.30 500.0 597.00 499.6 597.70 498.8 598.40 498.3 599.10 498.7 599.80 495.1 600.50 498.6 601.20 498.5 601.90 497.1 602.60 499.5 603.30 499.1 604.00 498.6 604.70 499.4 605.40 499.5 606.10 500.0 606.80 498.6 607.50 497.4 608.20 498.2 608.90 498.2 609.60 499.3 610.30 499.0 611.00 497.0 611.70 499.5 612.40 498.7 613.10 498.4 613.80 498.8 614.50 498.5 615.20 497.7 615.90 498.5 616.60 497.9 617.30 498.4 618.00 498.9 618.70 497.4 619.40 498.2 620.10 497.1 620.80 498.6 621.50 497.0 622.20 498.7 622.90 500.6 623.60 497.9 624.30 498.4 625.00 498.3 625.70 498.6 626.40 498.4 627.10 499.5 627.80 498.7 628.50 499.2 629.20 500.3 629.90 497.4 630.60 498.1 631.30 497.2 632.00 498.2 632.70 494.4 633.40 499.5 634.10 498.2 634.80 499.2 635.50 499.1 636.20 498.3 636.90 497.6 637.60 498.7 638.30 497.7 639.00 497.7 639.70 499.4 640.40 497.4 641.10 497.0 641.80 498.0 642.50 499.8 643.20 494.2 643.90 498.6 644.60 498.2 645.30 498.6 646.00 498.9 646.70 498.7 647.40 498.6 648.10 500.1 648.80 498.9 649.50 498.8 650.20 499.0 650.90 499.5 651.60 498.7 652.30 497.9 653.00 497.8 653.70 500.1 654.40 499.4 655.10 497.9 655.80 499.1 656.50 499.6 657.20 498.9 657.90 499.1 658.60 498.2 659.30 497.1 660.00 498.9 660.70 498.6 661.40 499.0 662.10 498.1 662.80 499.0 663.50 496.1 664.20 497.9 664.90 498.2 665.60 498.7 666.30 497.5 667.00 499.2 667.70 498.6 668.40 498.9 669.10 499.0 669.80 499.4 670.50 499.2 671.20 499.2 671.90 498.0 672.60 499.0 673.30 497.8 674.00 497.9 674.70 498.9 675.40 497.7 676.10 498.4 676.80 498.4 677.50 498.9 678.20 498.1 678.90 498.1 679.60 499.8 680.30 498.3 681.00 497.4 681.70 499.5 682.40 499.4 683.10 498.5 683.80 497.7 684.50 497.9 685.20 498.7 685.90 499.7 686.60 499.1 687.30 499.2 688.00 494.5 688.70 499.0 689.40 498.6 690.10 498.8 690.80 499.2 691.50 498.8 692.20 499.3 692.90 499.3 693.60 499.9 694.30 500.2 695.00 498.9 695.70 500.3 696.40 498.5 697.10 494.9 697.80 497.4 698.50 501.1 699.20 498.7 699.90 498.3 700.60 500.5 701.30 499.7 702.00 498.4 702.70 499.6 703.40 498.0 704.10 498.3 704.80 500.5 705.50 498.4 706.20 498.0 706.90 499.1 707.60 498.9 708.30 497.8 709.00 500.2 709.70 497.5 710.40 497.8 711 512.3" fill="#3da9e6" stroke="#5a3f72" stroke-width="1"/><rect x="502.5" y="390.8" width="208.5" height="121.49999999999994" fill="none" stroke="#5c5c5c" stroke-width="1.3"/><path d="M502.5 512.3 v-5 M502.5 390.8 v5" stroke="#4a4a4a" stroke-width="1"/><path d="M523.35 512.3 v-3 M523.35 390.8 v3" stroke="#4a4a4a" stroke-width="1"/><path d="M544.2 512.3 v-5 M544.2 390.8 v5" stroke="#4a4a4a" stroke-width="1"/><path d="M565.05 512.3 v-3 M565.05 390.8 v3" stroke="#4a4a4a" stroke-width="1"/><path d="M585.9 512.3 v-5 M585.9 390.8 v5" stroke="#4a4a4a" stroke-width="1"/><path d="M606.75 512.3 v-3 M606.75 390.8 v3" stroke="#4a4a4a" stroke-width="1"/><path d="M627.6 512.3 v-5 M627.6 390.8 v5" stroke="#4a4a4a" stroke-width="1"/><path d="M648.45 512.3 v-3 M648.45 390.8 v3" stroke="#4a4a4a" stroke-width="1"/><path d="M669.3 512.3 v-5 M669.3 390.8 v5" stroke="#4a4a4a" stroke-width="1"/><path d="M690.15 512.3 v-3 M690.15 390.8 v3" stroke="#4a4a4a" stroke-width="1"/><path d="M711.0 512.3 v-5 M711.0 390.8 v5" stroke="#4a4a4a" stroke-width="1"/><path d="M502.5 390.8 h5 M711 390.8 h-5" stroke="#4a4a4a" stroke-width="1"/><path d="M502.5 411.05 h3 M711 411.05 h-3" stroke="#4a4a4a" stroke-width="1"/><path d="M502.5 431.3 h5 M711 431.3 h-5" stroke="#4a4a4a" stroke-width="1"/><path d="M502.5 451.54999999999995 h3 M711 451.54999999999995 h-3" stroke="#4a4a4a" stroke-width="1"/><path d="M502.5 471.79999999999995 h5 M711 471.79999999999995 h-5" stroke="#4a4a4a" stroke-width="1"/><path d="M502.5 492.04999999999995 h3 M711 492.04999999999995 h-3" stroke="#4a4a4a" stroke-width="1"/><path d="M502.5 512.3 h5 M711 512.3 h-5" stroke="#4a4a4a" stroke-width="1"/><text x="606.5" y="364.5" font-size="12.6" text-anchor="middle" fill="#555555" font-family="Liberation Sans" dominant-baseline="central">FFT</text><text x="498" y="392.3" font-size="9" text-anchor="end" fill="#555555" font-family="Liberation Sans" dominant-baseline="central">0,6</text><text x="498" y="432.8" font-size="9" text-anchor="end" fill="#555555" font-family="Liberation Sans" dominant-baseline="central">0,4</text><text x="498" y="473.29999999999995" font-size="9" text-anchor="end" fill="#555555" font-family="Liberation Sans" dominant-baseline="central">0,2</text><text x="498" y="513.8" font-size="9" text-anchor="end" fill="#555555" font-family="Liberation Sans" dominant-baseline="central">0,0</text><text x="502.5" y="523.3" font-size="9" text-anchor="middle" fill="#555555" font-family="Liberation Sans" dominant-baseline="central">0,0</text><text x="544.2" y="523.3" font-size="9" text-anchor="middle" fill="#555555" font-family="Liberation Sans" dominant-baseline="central">0,1</text><text x="585.9" y="523.3" font-size="9" text-anchor="middle" fill="#555555" font-family="Liberation Sans" dominant-baseline="central">0,2</text><text x="627.6" y="523.3" font-size="9" text-anchor="middle" fill="#555555" font-family="Liberation Sans" dominant-baseline="central">0,3</text><text x="669.3" y="523.3" font-size="9" text-anchor="middle" fill="#555555" font-family="Liberation Sans" dominant-baseline="central">0,4</text><text x="711.0" y="523.3" font-size="9" text-anchor="middle" fill="#555555" font-family="Liberation Sans" dominant-baseline="central">0,5</text><text x="475" y="451.54999999999995" font-size="12.6" text-anchor="middle" fill="#555555" font-family="Liberation Sans" transform="rotate(-90 475 451.54999999999995)" dominant-baseline="central">amplitude</text><text x="608" y="541" font-size="12.6" text-anchor="middle" fill="#555555" font-family="Liberation Sans" dominant-baseline="central">frequency</text><path d="M502.5 603.3 V724.3" stroke="#e6e6e6" stroke-width="1"/><path d="M528.5625 603.3 V724.3" stroke="#d0d0d0" stroke-width="0.8" stroke-dasharray="1 2"/><path d="M554.625 603.3 V724.3" stroke="#e6e6e6" stroke-width="1"/><path d="M580.6875 603.3 V724.3" stroke="#d0d0d0" stroke-width="0.8" stroke-dasharray="1 2"/><path d="M606.75 603.3 V724.3" stroke="#e6e6e6" stroke-width="1"/><path d="M632.8125 603.3 V724.3" stroke="#d0d0d0" stroke-width="0.8" stroke-dasharray="1 2"/><path d="M658.875 603.3 V724.3" stroke="#e6e6e6" stroke-width="1"/><path d="M684.9375 603.3 V724.3" stroke="#d0d0d0" stroke-width="0.8" stroke-dasharray="1 2"/><path d="M711.0 603.3 V724.3" stroke="#e6e6e6" stroke-width="1"/><path d="M502.5 603.3 H711" stroke="#e6e6e6" stroke-width="1"/><path d="M502.5 623.4666666666666 H711" stroke="#d0d0d0" stroke-width="0.8" stroke-dasharray="1 2"/><path d="M502.5 643.6333333333333 H711" stroke="#e6e6e6" stroke-width="1"/><path d="M502.5 663.8 H711" stroke="#d0d0d0" stroke-width="0.8" stroke-dasharray="1 2"/><path d="M502.5 683.9666666666666 H711" stroke="#e6e6e6" stroke-width="1"/><path d="M502.5 704.1333333333333 H711" stroke="#d0d0d0" stroke-width="0.8" stroke-dasharray="1 2"/><path d="M502.5 724.3 H711" stroke="#e6e6e6" stroke-width="1"/><polygon points="502.50,657.35 502.51,657.37 502.48,657.44 502.44,657.52 502.42,657.60 502.44,657.64 502.53,657.63 502.72,657.54 503.02,657.35 503.48,656.96 504.08,656.37 504.78,655.65 505.55,654.90 506.34,654.21 507.12,653.65 507.85,653.32 508.49,653.31 509.07,653.72 509.61,654.52 510.13,655.57 510.63,656.74 511.10,657.92 511.55,658.97 511.99,659.76 512.40,660.17 512.80,660.12 513.17,659.69 513.51,659.01 513.84,658.20 514.15,657.39 514.44,656.69 514.73,656.23 515.01,656.14 515.26,656.73 515.47,658.03 515.66,659.71 515.84,661.43 516.03,662.59 516.25,662.59 516.51,662.59 516.83,662.19 517.21,658.81 517.62,653.47 518.07,646.91 518.54,639.88 519.05,633.11 519.59,627.35 520.15,623.35 520.74,621.85 521.37,623.62 522.05,628.26 522.76,634.81 523.50,642.30 524.25,649.75 525.00,656.20 525.75,660.67 526.48,662.19 527.20,660.05 527.93,654.88 528.66,647.70 529.39,639.52 530.12,631.39 530.83,624.31 531.53,619.31 532.21,617.42 532.87,619.35 533.51,624.46 534.14,631.67 534.75,639.93 535.36,648.17 535.96,655.33 536.56,660.36 537.16,662.19 537.77,660.09 538.38,654.75 538.99,647.27 539.59,638.72 540.18,630.17 540.76,622.72 541.32,617.44 541.85,615.40 542.37,617.15 542.86,621.88 543.34,628.68 543.81,636.63 544.26,644.79 544.69,652.25 545.10,658.09 545.50,661.38 545.88,661.90 546.23,660.41 546.57,657.52 546.89,653.82 547.20,649.90 547.50,646.37 547.80,643.81 548.11,642.83 548.41,643.56 548.71,645.51 549.00,648.29 549.28,651.52 549.57,654.83 549.86,657.83 550.15,660.14 550.46,661.38 550.76,661.52 551.06,660.92 551.36,659.76 551.66,658.23 551.98,656.51 552.31,654.79 552.67,653.26 553.06,652.10 553.50,651.14 553.98,650.10 554.50,649.08 555.03,648.15 555.56,647.38 556.07,646.86 556.55,646.66 556.97,646.86 557.34,647.74 557.67,649.33 557.98,651.37 558.26,653.59 558.52,655.73 558.78,657.51 559.05,658.68 559.32,658.96 559.58,658.35 559.81,657.10 560.03,655.33 560.24,653.16 560.48,650.71 560.74,648.09 561.04,645.42 561.40,642.83 561.81,639.97 562.24,636.59 562.71,632.92 563.21,629.21 563.74,625.69 564.31,622.60 564.92,620.16 565.57,618.63 566.29,618.12 567.10,618.47 567.96,619.47 568.85,620.90 569.73,622.55 570.59,624.20 571.38,625.66 572.09,626.69 572.68,627.47 573.19,628.27 573.64,629.03 574.06,629.72 574.47,630.28 574.92,630.66 575.41,630.83 576.00,630.73 576.69,630.16 577.47,629.09 578.31,627.70 579.17,626.19 580.03,624.74 580.85,623.54 581.60,622.79 582.25,622.66 582.80,623.11 583.27,623.93 583.68,625.08 584.04,626.54 584.38,628.27 584.71,630.24 585.03,632.41 585.38,634.76 585.73,637.63 586.07,641.21 586.39,645.20 586.71,649.33 587.03,653.30 587.35,656.82 587.66,659.61 587.99,661.38 588.31,662.10 588.64,662.05 588.97,661.36 589.30,660.17 589.63,658.63 589.96,656.88 590.28,655.06 590.59,653.31 590.90,651.56 591.20,649.63 591.49,647.53 591.78,645.27 592.07,642.86 592.36,640.30 592.65,637.59 592.94,634.76 593.21,631.41 593.47,627.37 593.71,622.96 593.96,618.53 594.23,614.38 594.53,610.84 594.88,608.25 595.28,606.93 595.75,607.26 596.27,609.08 596.84,611.94 597.43,615.37 598.05,618.91 598.69,622.08 599.33,624.43 599.97,625.48 600.63,625.09 601.32,623.62 602.04,621.41 602.76,618.80 603.47,616.12 604.17,613.70 604.83,611.87 605.45,610.96 606.01,611.09 606.53,611.99 607.03,613.41 607.50,615.12 607.96,616.90 608.42,618.50 608.88,619.69 609.36,620.24 609.84,619.91 610.33,618.81 610.82,617.26 611.31,615.55 611.80,614.00 612.29,612.92 612.78,612.61 613.27,613.38 613.77,615.40 614.29,618.45 614.82,622.24 615.35,626.52 615.86,630.99 616.34,635.38 616.79,639.42 617.17,642.83 617.50,645.84 617.77,648.82 617.99,651.68 618.18,654.35 618.37,656.73 618.56,658.76 618.76,660.33 619.00,661.38 619.27,661.83 619.56,661.72 619.85,661.16 620.16,660.25 620.46,659.07 620.76,657.72 621.06,656.31 621.35,654.93 621.61,653.50 621.87,651.90 622.12,650.16 622.37,648.30 622.62,646.33 622.88,644.27 623.15,642.16 623.43,640.00 623.72,637.57 624.00,634.72 624.29,631.67 624.59,628.61 624.90,625.74 625.24,623.25 625.62,621.35 626.04,620.24 626.50,620.14 627.01,620.95 627.55,622.41 628.12,624.22 628.71,626.12 629.30,627.82 629.89,629.05 630.47,629.52 631.04,629.15 631.62,628.16 632.21,626.76 632.80,625.13 633.39,623.47 633.98,621.97 634.57,620.83 635.16,620.24 635.74,620.28 636.32,620.81 636.89,621.67 637.47,622.71 638.05,623.77 638.64,624.68 639.24,625.31 639.85,625.48 640.47,624.99 641.11,623.89 641.75,622.43 642.41,620.87 643.07,619.45 643.73,618.44 644.39,618.08 645.06,618.63 645.75,620.20 646.48,622.63 647.22,625.68 647.96,629.14 648.68,632.80 649.36,636.45 649.99,639.86 650.53,642.83 650.99,645.67 651.37,648.73 651.69,651.83 651.97,654.78 652.23,657.39 652.50,659.48 652.80,660.88 653.14,661.38 653.53,660.58 653.93,658.48 654.34,655.51 654.77,652.10 655.21,648.70 655.65,645.73 656.09,643.62 656.53,642.83 656.98,643.54 657.45,645.44 657.94,648.17 658.42,651.35 658.89,654.62 659.35,657.63 659.78,660.00 660.18,661.38 660.52,661.84 660.81,661.75 661.06,661.22 661.30,660.32 661.55,659.15 661.82,657.81 662.14,656.37 662.52,654.93 662.99,653.11 663.52,650.67 664.10,647.88 664.71,645.04 665.32,642.43 665.91,640.33 666.46,639.02 666.95,638.79 667.39,639.98 667.79,642.46 668.16,645.83 668.50,649.66 668.83,653.54 669.16,657.07 669.49,659.82 669.82,661.38 670.14,661.88 670.43,661.75 670.70,661.09 670.98,659.94 671.27,658.40 671.60,656.53 671.98,654.41 672.43,652.10 672.96,648.99 673.56,644.73 674.21,639.82 674.90,634.79 675.61,630.12 676.31,626.34 677.00,623.96 677.64,623.47 678.25,625.65 678.84,630.34 679.41,636.67 679.99,643.76 680.56,650.73 681.13,656.71 681.72,660.82 682.33,662.19 682.96,660.08 683.61,655.04 684.27,648.05 684.94,640.10 685.60,632.20 686.27,625.32 686.91,620.47 687.54,618.63 688.17,620.23 688.80,624.53 689.42,630.71 690.04,637.99 690.63,645.57 691.20,652.66 691.74,658.46 692.24,662.19 692.68,662.59 693.09,662.59 693.47,662.59 693.82,662.24 694.15,660.64 694.46,659.07 694.78,657.86 695.10,657.35 695.42,657.47 695.73,657.88 696.03,658.49 696.32,659.21 696.61,659.95 696.89,660.62 697.17,661.12 697.45,661.38 697.73,661.36 698.01,661.14 698.28,660.79 698.56,660.35 698.82,659.89 699.07,659.46 699.31,659.13 699.53,658.96 699.74,658.95 699.94,659.04 700.12,659.20 700.30,659.41 700.46,659.65 700.60,659.87 700.73,660.05 700.84,660.17 700.92,660.23 700.98,660.26 701.02,660.26 701.05,660.25 701.06,660.22 701.07,660.20 701.08,660.18 701.10,660.17 701.10,667.43 701.08,667.42 701.07,667.40 701.06,667.38 701.05,667.35 701.02,667.34 700.98,667.34 700.92,667.37 700.84,667.43 700.73,667.55 700.60,667.73 700.46,667.95 700.30,668.19 700.12,668.40 699.94,668.56 699.74,668.65 699.53,668.64 699.31,668.47 699.07,668.14 698.82,667.71 698.56,667.25 698.28,666.81 698.01,666.46 697.73,666.24 697.45,666.22 697.17,666.48 696.89,666.98 696.61,667.65 696.32,668.39 696.03,669.11 695.73,669.72 695.42,670.13 695.10,670.25 694.78,669.74 694.46,668.53 694.15,666.96 693.82,665.36 693.47,665.01 693.09,665.01 692.68,665.01 692.24,665.41 691.74,669.14 691.20,674.94 690.63,682.03 690.04,689.61 689.42,696.89 688.80,703.07 688.17,707.37 687.54,708.97 686.91,707.13 686.27,702.28 685.60,695.40 684.94,687.50 684.27,679.55 683.61,672.56 682.96,667.52 682.33,665.41 681.72,666.78 681.13,670.89 680.56,676.87 679.99,683.84 679.41,690.93 678.84,697.26 678.25,701.95 677.64,704.13 677.00,703.64 676.31,701.26 675.61,697.48 674.90,692.81 674.21,687.78 673.56,682.87 672.96,678.61 672.43,675.50 671.98,673.19 671.60,671.07 671.27,669.20 670.98,667.66 670.70,666.51 670.43,665.85 670.14,665.72 669.82,666.22 669.49,667.78 669.16,670.53 668.83,674.06 668.50,677.94 668.16,681.77 667.79,685.14 667.39,687.62 666.95,688.81 666.46,688.58 665.91,687.27 665.32,685.17 664.71,682.55 664.10,679.72 663.52,676.93 662.99,674.49 662.52,672.67 662.14,671.23 661.82,669.79 661.55,668.45 661.30,667.28 661.06,666.38 660.81,665.85 660.52,665.76 660.18,666.22 659.78,667.60 659.35,669.97 658.89,672.98 658.42,676.25 657.94,679.43 657.45,682.16 656.98,684.06 656.53,684.77 656.09,683.98 655.65,681.87 655.21,678.90 654.77,675.50 654.34,672.09 653.93,669.12 653.53,667.02 653.14,666.22 652.80,666.72 652.50,668.12 652.23,670.21 651.97,672.82 651.69,675.77 651.37,678.87 650.99,681.93 650.53,684.77 649.99,687.74 649.36,691.15 648.68,694.80 647.96,698.46 647.22,701.92 646.48,704.97 645.75,707.40 645.06,708.97 644.39,709.52 643.73,709.16 643.07,708.15 642.41,706.73 641.75,705.17 641.11,703.71 640.47,702.61 639.85,702.12 639.24,702.29 638.64,702.92 638.05,703.83 637.47,704.89 636.89,705.93 636.32,706.79 635.74,707.32 635.16,707.36 634.57,706.77 633.98,705.63 633.39,704.13 632.80,702.47 632.21,700.84 631.62,699.44 631.04,698.45 630.47,698.08 629.89,698.55 629.30,699.78 628.71,701.48 628.12,703.38 627.55,705.19 627.01,706.65 626.50,707.46 626.04,707.36 625.62,706.25 625.24,704.35 624.90,701.86 624.59,698.99 624.29,695.93 624.00,692.88 623.72,690.03 623.43,687.60 623.15,685.44 622.88,683.33 622.62,681.27 622.37,679.30 622.12,677.44 621.87,675.70 621.61,674.10 621.35,672.67 621.06,671.29 620.76,669.88 620.46,668.53 620.16,667.35 619.85,666.44 619.56,665.88 619.27,665.77 619.00,666.22 618.76,667.27 618.56,668.84 618.37,670.87 618.18,673.25 617.99,675.92 617.77,678.78 617.50,681.76 617.17,684.77 616.79,688.18 616.34,692.22 615.86,696.61 615.35,701.08 614.82,705.36 614.29,709.15 613.77,712.20 613.27,714.22 612.78,714.99 612.29,714.68 611.80,713.60 611.31,712.05 610.82,710.34 610.33,708.79 609.84,707.69 609.36,707.36 608.88,707.91 608.42,709.10 607.96,710.70 607.50,712.48 607.03,714.19 606.53,715.61 606.01,716.51 605.45,716.64 604.83,715.73 604.17,713.90 603.47,711.48 602.76,708.80 602.04,706.19 601.32,703.98 600.63,702.51 599.97,702.12 599.33,703.17 598.69,705.52 598.05,708.69 597.43,712.23 596.84,715.66 596.27,718.52 595.75,720.34 595.28,720.67 594.88,719.35 594.53,716.76 594.23,713.22 593.96,709.07 593.71,704.64 593.47,700.23 593.21,696.19 592.94,692.84 592.65,690.01 592.36,687.30 592.07,684.74 591.78,682.33 591.49,680.07 591.20,677.97 590.90,676.04 590.59,674.29 590.28,672.54 589.96,670.72 589.63,668.97 589.30,667.43 588.97,666.24 588.64,665.55 588.31,665.50 587.99,666.22 587.66,667.99 587.35,670.78 587.03,674.30 586.71,678.27 586.39,682.40 586.07,686.39 585.73,689.97 585.38,692.84 585.03,695.19 584.71,697.36 584.38,699.33 584.04,701.06 583.68,702.52 583.27,703.67 582.80,704.49 582.25,704.94 581.60,704.81 580.85,704.06 580.03,702.86 579.17,701.41 578.31,699.90 577.47,698.51 576.69,697.44 576.00,696.87 575.41,696.77 574.92,696.94 574.47,697.32 574.06,697.88 573.64,698.57 573.19,699.33 572.68,700.13 572.09,700.91 571.38,701.94 570.59,703.40 569.73,705.05 568.85,706.70 567.96,708.13 567.10,709.13 566.29,709.48 565.57,708.97 564.92,707.44 564.31,705.00 563.74,701.91 563.21,698.39 562.71,694.68 562.24,691.01 561.81,687.63 561.40,684.77 561.04,682.18 560.74,679.51 560.48,676.89 560.24,674.44 560.03,672.27 559.81,670.50 559.58,669.25 559.32,668.64 559.05,668.92 558.78,670.09 558.52,671.87 558.26,674.01 557.98,676.23 557.67,678.27 557.34,679.86 556.97,680.74 556.55,680.94 556.07,680.74 555.56,680.22 555.03,679.45 554.50,678.52 553.98,677.50 553.50,676.46 553.06,675.50 552.67,674.34 552.31,672.81 551.98,671.09 551.66,669.37 551.36,667.84 551.06,666.68 550.76,666.08 550.46,666.22 550.15,667.46 549.86,669.77 549.57,672.77 549.28,676.08 549.00,679.31 548.71,682.09 548.41,684.04 548.11,684.77 547.80,683.79 547.50,681.23 547.20,677.70 546.89,673.78 546.57,670.08 546.23,667.19 545.88,665.70 545.50,666.22 545.10,669.51 544.69,675.35 544.26,682.81 543.81,690.97 543.34,698.92 542.86,705.72 542.37,710.45 541.85,712.20 541.32,710.16 540.76,704.88 540.18,697.43 539.59,688.88 538.99,680.33 538.38,672.85 537.77,667.51 537.16,665.41 536.56,667.24 535.96,672.27 535.36,679.43 534.75,687.67 534.14,695.93 533.51,703.14 532.87,708.25 532.21,710.18 531.53,708.29 530.83,703.29 530.12,696.21 529.39,688.08 528.66,679.90 527.93,672.72 527.20,667.55 526.48,665.41 525.75,666.93 525.00,671.40 524.25,677.85 523.50,685.30 522.76,692.79 522.05,699.34 521.37,703.98 520.74,705.75 520.15,704.25 519.59,700.25 519.05,694.49 518.54,687.72 518.07,680.69 517.62,674.13 517.21,668.79 516.83,665.41 516.51,665.01 516.25,665.01 516.03,665.01 515.84,666.17 515.66,667.89 515.47,669.57 515.26,670.87 515.01,671.46 514.73,671.37 514.44,670.91 514.15,670.21 513.84,669.40 513.51,668.59 513.17,667.91 512.80,667.48 512.40,667.43 511.99,667.84 511.55,668.63 511.10,669.68 510.63,670.86 510.13,672.03 509.61,673.08 509.07,673.88 508.49,674.29 507.85,674.28 507.12,673.95 506.34,673.39 505.55,672.70 504.78,671.95 504.08,671.23 503.48,670.64 503.02,670.25 502.72,670.06 502.53,669.97 502.44,669.96 502.42,670.00 502.44,670.08 502.48,670.16 502.51,670.23 502.50,670.25" fill="#0000ff" stroke="#0000ff" stroke-width="1.2" stroke-linejoin="round"/><rect x="502.5" y="603.3" width="208.5" height="121.0" fill="none" stroke="#5c5c5c" stroke-width="1.3"/><path d="M502.5 724.3 v-5 M502.5 603.3 v5" stroke="#4a4a4a" stroke-width="1"/><path d="M528.5625 724.3 v-3 M528.5625 603.3 v3" stroke="#4a4a4a" stroke-width="1"/><path d="M554.625 724.3 v-5 M554.625 603.3 v5" stroke="#4a4a4a" stroke-width="1"/><path d="M580.6875 724.3 v-3 M580.6875 603.3 v3" stroke="#4a4a4a" stroke-width="1"/><path d="M606.75 724.3 v-5 M606.75 603.3 v5" stroke="#4a4a4a" stroke-width="1"/><path d="M632.8125 724.3 v-3 M632.8125 603.3 v3" stroke="#4a4a4a" stroke-width="1"/><path d="M658.875 724.3 v-5 M658.875 603.3 v5" stroke="#4a4a4a" stroke-width="1"/><path d="M684.9375 724.3 v-3 M684.9375 603.3 v3" stroke="#4a4a4a" stroke-width="1"/><path d="M711.0 724.3 v-5 M711.0 603.3 v5" stroke="#4a4a4a" stroke-width="1"/><path d="M502.5 603.3 h5 M711 603.3 h-5" stroke="#4a4a4a" stroke-width="1"/><path d="M502.5 623.4666666666666 h3 M711 623.4666666666666 h-3" stroke="#4a4a4a" stroke-width="1"/><path d="M502.5 643.6333333333333 h5 M711 643.6333333333333 h-5" stroke="#4a4a4a" stroke-width="1"/><path d="M502.5 663.8 h3 M711 663.8 h-3" stroke="#4a4a4a" stroke-width="1"/><path d="M502.5 683.9666666666666 h5 M711 683.9666666666666 h-5" stroke="#4a4a4a" stroke-width="1"/><path d="M502.5 704.1333333333333 h3 M711 704.1333333333333 h-3" stroke="#4a4a4a" stroke-width="1"/><path d="M502.5 724.3 h5 M711 724.3 h-5" stroke="#4a4a4a" stroke-width="1"/><text x="606.5" y="576.5" font-size="12.6" text-anchor="middle" fill="#555555" font-family="Liberation Sans" dominant-baseline="central">Filtered signal</text><text x="498" y="604.8" font-size="9" text-anchor="end" fill="#555555" font-family="Liberation Sans" dominant-baseline="central">1,5</text><text x="498" y="645.1333333333333" font-size="9" text-anchor="end" fill="#555555" font-family="Liberation Sans" dominant-baseline="central">0,5</text><text x="498" y="685.4666666666666" font-size="9" text-anchor="end" fill="#555555" font-family="Liberation Sans" dominant-baseline="central">-0,5</text><text x="498" y="725.8" font-size="9" text-anchor="end" fill="#555555" font-family="Liberation Sans" dominant-baseline="central">-1,5</text><text x="502.5" y="737.0999999999999" font-size="9" text-anchor="middle" fill="#555555" font-family="Liberation Sans" dominant-baseline="central">0</text><text x="554.625" y="737.0999999999999" font-size="9" text-anchor="middle" fill="#555555" font-family="Liberation Sans" dominant-baseline="central">2</text><text x="606.75" y="737.0999999999999" font-size="9" text-anchor="middle" fill="#555555" font-family="Liberation Sans" dominant-baseline="central">4</text><text x="658.875" y="737.0999999999999" font-size="9" text-anchor="middle" fill="#555555" font-family="Liberation Sans" dominant-baseline="central">6</text><text x="711.0" y="737.0999999999999" font-size="9" text-anchor="middle" fill="#555555" font-family="Liberation Sans" dominant-baseline="central">8</text><text x="472" y="663.8" font-size="12.6" text-anchor="middle" fill="#555555" font-family="Liberation Sans" transform="rotate(-90 472 663.8)" dominant-baseline="central">signal</text><text x="608" y="755.5" font-size="12.6" text-anchor="middle" fill="#555555" font-family="Liberation Sans" dominant-baseline="central">t</text><text x="692" y="751.5" font-size="9" text-anchor="middle" fill="#555555" font-family="Liberation Sans" dominant-baseline="central">×10000</text></svg>
<div class="t" style="left:768px;top:138.08px;font-size:10.7px;color:#585858;">The data was generated using the following Octave code:</div>
<div class="t" style="left:768px;top:169.30px;font-size:6.5px;color:#6a6a6a;font-style:italic;">t=1:1:4000;</div>
<div class="t" style="left:768px;top:179.43px;font-size:6.5px;color:#6a6a6a;font-style:italic;">f=.05; % Signal frequency</div>
<div class="t" style="left:768px;top:189.56px;font-size:6.5px;color:#6a6a6a;font-style:italic;">noise=4; % RMS random noise</div>
<div class="t" style="left:768px;top:199.69px;font-size:6.5px;color:#6a6a6a;font-style:italic;">s=sin(2*pi*f*t);</div>
<div class="t" style="left:768px;top:209.82px;font-size:6.5px;color:#6a6a6a;font-style:italic;">space=zeros(size(t)); % Small interval of silence</div>
<div class="t" style="left:768px;top:219.95px;font-size:6.5px;color:#6a6a6a;font-style:italic;">dit=[space s ];</div>
<div class="t" style="left:768px;top:230.08px;font-size:6.5px;color:#6a6a6a;font-style:italic;">dash=[space s s s s s];</div>
<div class="t" style="left:768px;top:240.21px;font-size:6.5px;color:#6a6a6a;font-style:italic;">ess=[space dit dit dit space]; % the letter "S" in Morse Code</div>
<div class="t" style="left:768px;top:250.34px;font-size:6.5px;color:#6a6a6a;font-style:italic;">oh=[space dash dash dash space];&nbsp; % the letter "O" in Morse Code</div>
<div class="t" style="left:768px;top:260.47px;font-size:6.5px;color:#6a6a6a;font-style:italic;">sos=[space ess oh ess space];&nbsp; % "SOS" in Morse Code, surrounded by spaces</div>
<div class="t" style="left:768px;top:270.60px;font-size:6.5px;color:#6a6a6a;font-style:italic;">signal=std(sos);</div>
<div class="t" style="left:768px;top:280.73px;font-size:6.5px;color:#6a6a6a;font-style:italic;">SNR=signal/std(noise.*randn(size(sos))) % Signal-To-Noise ratio</div>
<div class="t" style="left:768px;top:290.86px;font-size:6.5px;color:#6a6a6a;font-style:italic;">nsos=sos+noise.*randn(size(sos));&nbsp; % Add lots of random white noise</div>
<div class="t" style="left:768px;top:300.99px;font-size:6.5px;color:#6a6a6a;font-style:italic;">nsos=nsos./max(sos);</div>
<div class="t" style="left:768px;top:321.14px;font-size:10.6px;color:#585858;">It creates a pulsed fixed frequency sine wave that spells out "SOS"</div>
<div class="t" style="left:768px;top:335.74px;font-size:10.6px;color:#585858;">in Morse code and adds random white noise so that the SNR is poor.</div>
<div class="t" style="left:775px;top:424.19px;font-size:10.68px;color:#585858;">The white noise has a frequency spectrum that is spread out over</div>
<div class="t" style="left:775px;top:438.79px;font-size:10.68px;color:#585858;">&nbsp;the entire range of frequencies. The signal itself is concentrated</div>
<div class="t" style="left:775px;top:453.39px;font-size:10.68px;color:#585858;">mostly at a fixed frequency 0.05 but the presence of the Morse</div>
<div class="t" style="left:775px;top:467.99px;font-size:10.68px;color:#585858;">Code pulses spreads out its spectrum.</div>
<div class="t" style="left:771.7px;top:623.59px;font-size:10.85px;color:#585858;">A Fourier bandpass filter tuned to the signal frequency isolates the</div>
<div class="t" style="left:771.7px;top:638.49px;font-size:10.85px;color:#585858;">signal from the noise.</div>
<div class="t" style="left:771.7px;top:667.59px;font-size:10.85px;color:#585858;">Try out different values for the width of the bandpass filter to see</div>
<div class="t" style="left:771.7px;top:682.59px;font-size:10.85px;color:#585858;">how and when the signal starts emerging from the noise.</div>
<div style="position:absolute;left:1127px;top:89px;width:298px;height:726px;background:#25282b;border-radius:3px;"></div>
<div class="t" style="left:1130.6px;top:93.05px;font-size:9.6px;color:#fcfcfc;">Fourier Transform</div>
<svg style="left:1395px;top:94.2px;" width="8" height="8" viewBox="0 0 8 8"><path d="M3.7 0.5 L6.9 3.7 L3.7 6.9 L0.5 3.7 Z" fill="none" stroke="#a0a3a6" stroke-width="1"/></svg>
<svg style="left:1409px;top:92px;" width="12" height="12" viewBox="0 0 12 12"><circle cx="5.8" cy="5.8" r="5.7" fill="#b3b3b3"/><path d="M3 3 L8.6 8.6 M8.6 3 L3 8.6" stroke="#2a2a2a" stroke-width="0.9"/></svg>
<div style="position:absolute;left:1128px;top:110px;width:297px;height:705px;background:#1e2124;border:1.3px solid #3daee9;border-radius:3px;"></div>
<div style="position:absolute;left:1134px;top:135.5px;width:284px;height:631px;background:#25282b;border:1px solid #44484c;border-radius:3px;"></div>
<div style="position:absolute;left:1134px;top:116px;width:56px;height:21px;background:#25282b;border:1px solid #44484c;border-bottom:none;border-radius:3px 3px 0 0;"></div>
<div style="position:absolute;left:1134.5px;top:116px;width:55px;height:2px;background:#3daee9;border-radius:2px 2px 0 0;"></div>
<div style="position:absolute;left:1247px;top:118px;width:1px;height:17px;background:#25282b;"></div>
<div style="position:absolute;left:1303px;top:118px;width:1px;height:17px;background:#25282b;"></div>
<div style="position:absolute;left:1359.5px;top:118px;width:1px;height:17px;background:#25282b;"></div>
<div class="t" style="left:1122px;width:80px;text-align:center;top:120.05px;font-size:9.6px;color:#fcfcfc">General</div>
<div class="t" style="left:1178px;width:80px;text-align:center;top:120.05px;font-size:9.6px;color:#fcfcfc">Line</div>
<div class="t" style="left:1234px;width:80px;text-align:center;top:120.05px;font-size:9.6px;color:#fcfcfc">Symbol</div>
<div class="t" style="left:1290.4px;width:80px;text-align:center;top:120.05px;font-size:9.6px;color:#fcfcfc">Values</div>
<div class="t" style="left:1346.6px;width:80px;text-align:center;top:120.05px;font-size:9.6px;color:#fcfcfc">Filling</div>
<div class="t" style="left:1137.6px;top:145.05px;font-size:9.6px;color:#fcfcfc;">Name:</div>
<div style="position:absolute;left:1200.4px;top:141px;width:213.39999999999986px;height:19.5px;background:#1b1e20;border:1px solid #4a4e52;border-radius:3px;"></div><div class="t" style="left:1205.4px;top:144.80px;font-size:9.6px;color:#fcfcfc;">Fourier transform</div>
<div class="t" style="left:1137.6px;top:170.35px;font-size:9.6px;color:#fcfcfc;">Comment:</div>
<div style="position:absolute;left:1200.4px;top:164.5px;width:213.39999999999986px;height:22.900000000000006px;background:#1b1e20;border:1px solid #4a4e52;border-radius:3px;"></div>
<div class="t" style="left:1137.6px;top:203.05px;font-size:9.6px;color:#fcfcfc;font-weight:bold;">Data</div>
<div class="t" style="left:1137.6px;top:222.35px;font-size:9.6px;color:#fcfcfc;">x-Data:</div>
<div style="position:absolute;left:1200.4px;top:217.7px;width:213.39999999999986px;height:20.100000000000023px;background:#2f3337;border:1px solid #53575b;border-radius:3px;"></div><div class="t" style="left:1204.9px;top:221.80px;font-size:9.6px;color:#fcfcfc;">t [X]</div><svg style="left:1402.8px;top:225.55px;" width="8" height="5" viewBox="0 0 8 5"><path d="M0.5 0.5 L3.8 3.8 L7.1 0.5" fill="none" stroke="#e0e0e0" stroke-width="1"/></svg>
<div class="t" style="left:1137.6px;top:246.05px;font-size:9.6px;color:#fcfcfc;">y-Data:</div>
<div style="position:absolute;left:1200.4px;top:241.3px;width:213.39999999999986px;height:20.099999999999966px;background:#2f3337;border:1px solid #53575b;border-radius:3px;"></div><div class="t" style="left:1204.9px;top:245.40px;font-size:9.6px;color:#fcfcfc;">signal [Y]</div><svg style="left:1402.8px;top:249.15px;" width="8" height="5" viewBox="0 0 8 5"><path d="M0.5 0.5 L3.8 3.8 L7.1 0.5" fill="none" stroke="#e0e0e0" stroke-width="1"/></svg>
<div class="t" style="left:1137.6px;top:266.05px;font-size:9.6px;color:#fcfcfc;">x-Range:</div>
<div style="position:absolute;left:1201px;top:266px;width:12px;height:12px;background:#1e3a4a;border:1px solid #3daee9;border-radius:2px;"></div><svg style="left:1203px;top:268.5px;" width="8" height="7" viewBox="0 0 8 7"><path d="M0.8 3.5 L3 5.8 L7.2 1" fill="none" stroke="#fcfcfc" stroke-width="1.4"/></svg>
<div class="t" style="left:1217px;top:266.05px;font-size:9.6px;color:#fcfcfc;">Auto</div>
<div class="t" style="left:1200.2px;top:286.65px;font-size:9.6px;color:#6b6f73;">Minimum:</div>
<div style="position:absolute;left:1246.5px;top:283.1px;width:167.29999999999995px;height:18.899999999999977px;background:#1b1e20;border:1px solid #36393d;border-radius:3px;"></div><div class="t" style="left:1251.5px;top:286.60px;font-size:9.6px;color:#6b6f73;">1</div>
<div class="t" style="left:1200.2px;top:310.45px;font-size:9.6px;color:#6b6f73;">Maximum:</div>
<div style="position:absolute;left:1248.1px;top:305.6px;width:165.70000000000005px;height:20.799999999999955px;background:#1b1e20;border:1px solid #36393d;border-radius:3px;"></div><div class="t" style="left:1253.1px;top:310.05px;font-size:9.6px;color:#6b6f73;">76000</div>
<div class="t" style="left:1137.6px;top:342.05px;font-size:9.6px;color:#fcfcfc;font-weight:bold;">Options</div>
<div class="t" style="left:1137.6px;top:361.45px;font-size:9.6px;color:#fcfcfc;">Window:</div>
<div style="position:absolute;left:1200.4px;top:356.7px;width:213.39999999999986px;height:20.30000000000001px;background:#2f3337;border:1px solid #53575b;border-radius:3px;"></div><div class="t" style="left:1204.9px;top:360.90px;font-size:9.6px;color:#fcfcfc;">rectangular (uniform)</div><svg style="left:1402.8px;top:364.65000000000003px;" width="8" height="5" viewBox="0 0 8 5"><path d="M0.5 0.5 L3.8 3.8 L7.1 0.5" fill="none" stroke="#e0e0e0" stroke-width="1"/></svg>
<div class="t" style="left:1137.6px;top:385.25px;font-size:9.6px;color:#fcfcfc;">Output:</div>
<div style="position:absolute;left:1200.4px;top:380.4px;width:213.39999999999986px;height:20.30000000000001px;background:#2f3337;border:1px solid #53575b;border-radius:3px;"></div><div class="t" style="left:1204.9px;top:384.60px;font-size:9.6px;color:#fcfcfc;">Amplitude</div><svg style="left:1402.8px;top:388.34999999999997px;" width="8" height="5" viewBox="0 0 8 5"><path d="M0.5 0.5 L3.8 3.8 L7.1 0.5" fill="none" stroke="#e0e0e0" stroke-width="1"/></svg>
<div style="position:absolute;left:1201px;top:405.5px;width:12px;height:12px;background:#1b1e20;border:1px solid #56595d;border-radius:2px;"></div>
<div class="t" style="left:1217px;top:405.35px;font-size:9.6px;color:#fcfcfc;">Two sided</div>
<div style="position:absolute;left:1309.5px;top:405.5px;width:12px;height:12px;background:#1f2224;border:1px solid #34373b;border-radius:2px;"></div>
<div class="t" style="left:1325px;top:405.35px;font-size:9.6px;color:#6b6f73;">Shifted</div>
<div class="t" style="left:1137.6px;top:425.95px;font-size:9.6px;color:#fcfcfc;">X axis scale:</div>
<div style="position:absolute;left:1200.4px;top:421.7px;width:213.39999999999986px;height:20.100000000000023px;background:#2f3337;border:1px solid #53575b;border-radius:3px;"></div><div class="t" style="left:1204.9px;top:425.80px;font-size:9.6px;color:#fcfcfc;">Frequency</div><svg style="left:1402.8px;top:429.55px;" width="8" height="5" viewBox="0 0 8 5"><path d="M0.5 0.5 L3.8 3.8 L7.1 0.5" fill="none" stroke="#e0e0e0" stroke-width="1"/></svg>
<div class="t" style="left:1137.6px;top:457.35px;font-size:9.6px;color:#fcfcfc;font-weight:bold;">Results:</div>
<div style="position:absolute;left:1200.4px;top:457.8px;width:213.39999999999986px;height:132.2px;background:#1b1e20;border:1px solid #4a4e52;border-radius:3px;"></div>
<div class="t" style="left:1204px;top:461.85px;font-size:9.6px;color:#fcfcfc;">status: Success</div>
<div class="t" style="left:1204px;top:474.35px;font-size:9.6px;color:#fcfcfc;">calculation time: 87 ms</div>
<div style="position:absolute;left:1137.5px;top:594px;width:277px;height:1px;background:#44484c;"></div>
<div style="position:absolute;left:1355.2px;top:597.5px;width:58.6px;height:22px;background:#2a2d31;border:1px solid #3a3e42;border-radius:3px;"></div>
<div class="t" style="left:1360px;top:602.85px;font-size:9.6px;color:#6b6f73;">Recalculate</div>
<div class="t" style="left:1137.6px;top:627.85px;font-size:9.6px;color:#fcfcfc;">Plot range:</div>
<div style="position:absolute;left:1200.2px;top:622.6px;width:151.79999999999995px;height:21.399999999999977px;background:#2a2d31;border:1px solid #3a3e42;border-radius:3px;"></div><div class="t" style="left:1204.7px;top:627.35px;font-size:9.6px;color:#6b6f73;">1 : x = 0 .. 0,5, y = 0 .. 0,6</div><svg style="left:1341px;top:631.0999999999999px;" width="8" height="5" viewBox="0 0 8 5"><path d="M0.5 0.5 L3.8 3.8 L7.1 0.5" fill="none" stroke="#6b6f73" stroke-width="1"/></svg>
<div style="position:absolute;left:1138.7px;top:749.5px;width:12px;height:12px;background:#1e3a4a;border:1px solid #3daee9;border-radius:2px;"></div><svg style="left:1140.7px;top:752.0px;" width="8" height="7" viewBox="0 0 8 7"><path d="M0.8 3.5 L3 5.8 L7.2 1" fill="none" stroke="#fcfcfc" stroke-width="1.4"/></svg>
<div class="t" style="left:1154px;top:749.55px;font-size:9.6px;color:#fcfcfc;">Visible</div>
<div style="position:absolute;left:1339.6px;top:775.7px;width:25px;height:25px;background:#2a2d31;border:1px solid #44484c;border-radius:3px;"></div>
<div style="position:absolute;left:1366px;top:775.7px;width:25px;height:25px;background:#2a2d31;border:1px solid #44484c;border-radius:3px;"></div>
<div style="position:absolute;left:1393.2px;top:775.7px;width:25px;height:25px;background:#2a2d31;border:1px solid #44484c;border-radius:3px;"></div>
<svg style="left:1346px;top:782px;" width="12" height="11" viewBox="0 0 12 11"><path d="M0.5 1 H4.5 L5.5 2.5 H11.5 V4 H0.5 Z" fill="#b0b0b0"/><rect x="0.5" y="4" width="11" height="6.5" fill="none" stroke="#b0b0b0" stroke-width="1.1"/></svg>
<svg style="left:1373px;top:782px;" width="12" height="12" viewBox="0 0 12 12"><path d="M0.5 0.5 H9 L11.5 3 V11.5 H0.5 Z" fill="none" stroke="#fcfcfc" stroke-width="1.1" stroke-linejoin="round"/><rect x="3" y="0.5" width="5" height="3" fill="none" stroke="#fcfcfc" stroke-width="1.1" stroke-linejoin="round"/><rect x="2.5" y="7" width="7" height="4.5" fill="none" stroke="#fcfcfc" stroke-width="1.1" stroke-linejoin="round"/></svg>
<svg style="left:1400px;top:782px;" width="12" height="12" viewBox="0 0 12 12"><path d="M6 11.5 H0.5 V0.5 H9 L11.5 3 V5" fill="none" stroke="#fcfcfc" stroke-width="1.1" stroke-linejoin="round"/><rect x="3" y="0.5" width="5" height="3" fill="none" stroke="#fcfcfc" stroke-width="1.1" stroke-linejoin="round"/><path d="M2.5 11.5 V7 H7" fill="none" stroke="#fcfcfc" stroke-width="1.1" stroke-linejoin="round"/><path d="M6.5 11.5 L11 7 L12 8 L7.5 12.5 Z" fill="#fcfcfc"/></svg>
<div class="t" style="right:78px;top:819.55px;font-size:9.6px;color:#fcfcfc">Memory used 348 MB, peak 3.811 MB</div></body></html>
